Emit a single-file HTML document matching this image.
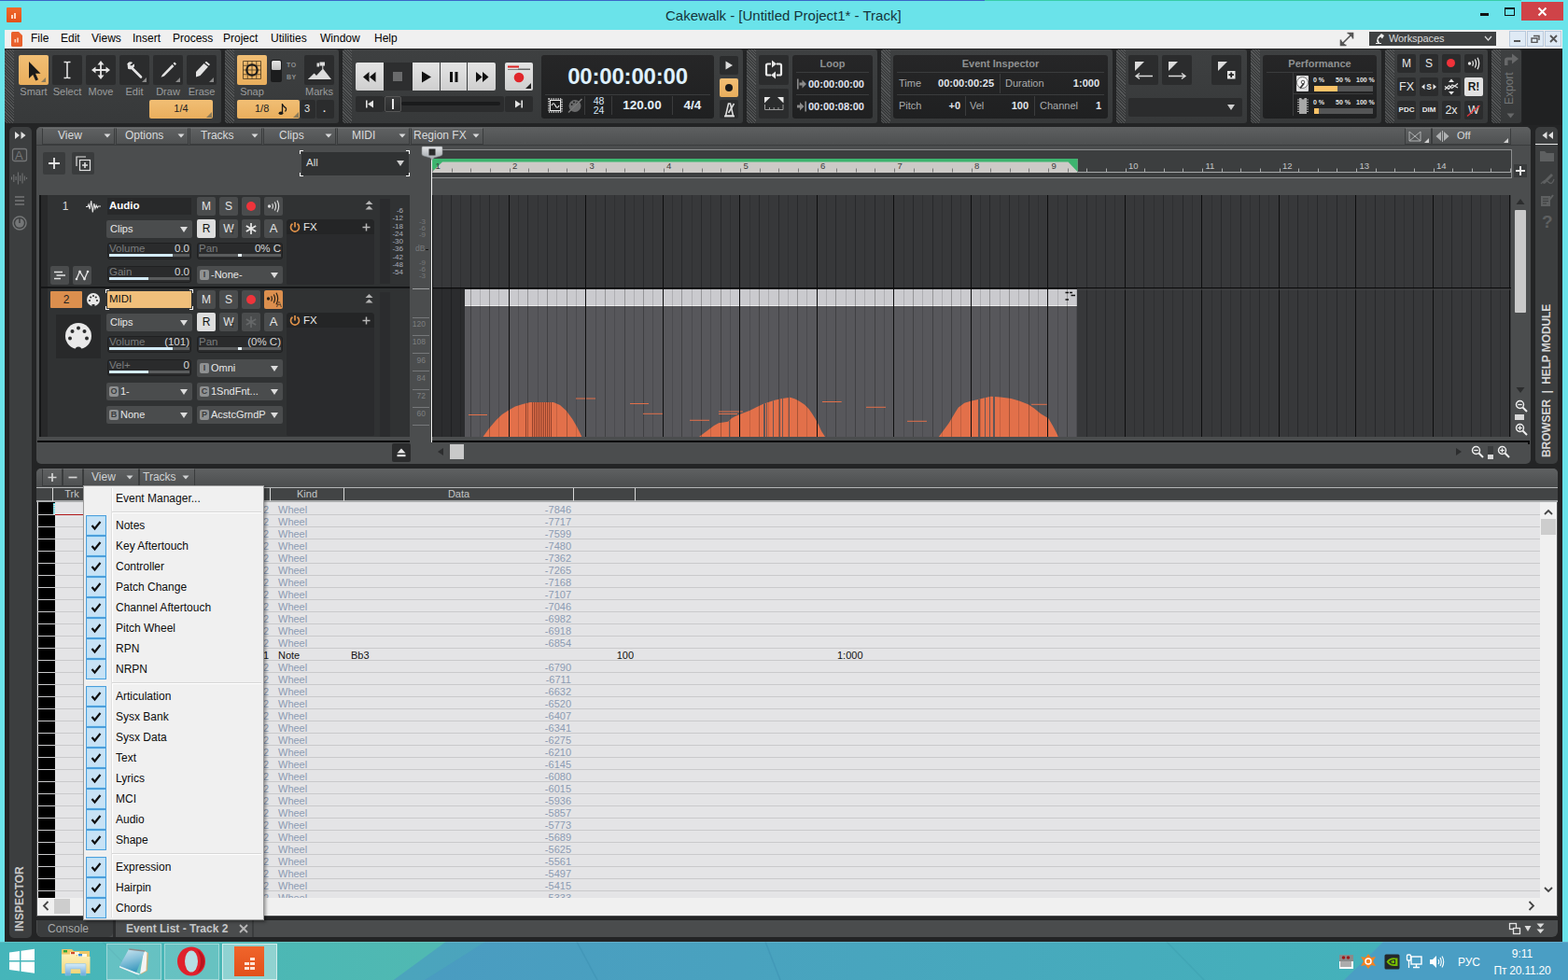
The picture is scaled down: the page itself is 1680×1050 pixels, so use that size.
<!DOCTYPE html>
<html><head><meta charset="utf-8"><title>Cakewalk</title><style>
html,body{margin:0;padding:0;}
body{width:1680px;height:1050px;overflow:hidden;position:relative;background:#6ae3ea;font-family:"Liberation Sans",sans-serif;font-size:12px;color:#e6e6e6;}
div,svg{position:absolute;box-sizing:border-box;}
.t{white-space:nowrap;line-height:1;}
.c{text-align:center;white-space:nowrap;line-height:1;}
.r{text-align:right;white-space:nowrap;line-height:1;}
.btn{background:#4b4d4e;border-radius:2px;}
.dd{background:#4b4d4e;border-radius:2px;}
.hatch{background:repeating-linear-gradient(45deg,rgba(255,255,255,0) 0,rgba(255,255,255,0) 1.5px,rgba(255,255,255,0.15) 1.5px,rgba(255,255,255,0.15) 2.3px);border-radius:3px 0 0 3px;}
.mod{background:#3d3f40;border-radius:3px;}
.tb{background:#2b2c2d;border-radius:2px;}
.lcd{background:linear-gradient(#262627,#1f2021);border-radius:3px;}
</style></head><body>
<div style="left:0px;top:0px;width:1055px;height:1px;background:#3a66c8;"></div>
<div style="left:1055px;top:0px;width:575px;height:1px;background:#38cda6;"></div>
<div style="left:7px;top:8px;width:16px;height:16px;background:linear-gradient(#f0682a,#e2521a);border-radius:1px;"></div>
<div style="left:12px;top:16px;width:2px;height:4px;background:#ffd9c4;"></div>
<div style="left:15px;top:14px;width:2px;height:6px;background:#ffd9c4;"></div>
<div class="t" style="left:0px;top:9px;left:713px;font-size:15px;color:#15343a;letter-spacing:0px;">Cakewalk - [Untitled Project1* - Track]</div>
<div style="left:1586px;top:14px;width:9px;height:3px;background:#111;"></div>
<div style="left:1612px;top:8px;width:11px;height:9px;border:1px solid #111;border-top:2px solid #111;"></div>
<div style="left:1630px;top:2px;width:45px;height:20px;background:#cf4348;"></div>
<svg style="left:1647px;top:7px;" width="11" height="11" viewBox="0 0 11 11"><path d="M1.5 1.5L9.5 9.5M9.5 1.5L1.5 9.5" stroke="#fff" stroke-width="2" fill="none"/></svg>
<div style="left:5px;top:32px;width:1669px;height:20px;background:#f0f0f0;"></div>
<svg style="left:12px;top:34px;" width="12" height="16" viewBox="0 0 12 16"><path d="M0 1.5Q0 0 1.5 0H8L12 4V14.5Q12 16 10.5 16H1.5Q0 16 0 14.5Z" fill="#e9602c"/><rect x="3.5" y="8" width="1.6" height="3.5" fill="#ffd5c0"/><rect x="6.2" y="6.5" width="1.6" height="5" fill="#ffd5c0"/></svg>
<div class="t" style="left:33px;top:35px;font-size:12px;color:#000;">File</div>
<div class="t" style="left:65px;top:35px;font-size:12px;color:#000;">Edit</div>
<div class="t" style="left:98px;top:35px;font-size:12px;color:#000;">Views</div>
<div class="t" style="left:142px;top:35px;font-size:12px;color:#000;">Insert</div>
<div class="t" style="left:185px;top:35px;font-size:12px;color:#000;">Process</div>
<div class="t" style="left:239px;top:35px;font-size:12px;color:#000;">Project</div>
<div class="t" style="left:290px;top:35px;font-size:12px;color:#000;">Utilities</div>
<div class="t" style="left:343px;top:35px;font-size:12px;color:#000;">Window</div>
<div class="t" style="left:401px;top:35px;font-size:12px;color:#000;">Help</div>
<svg style="left:1434px;top:33px;" width="18" height="18" viewBox="0 0 18 18"><path d="M3 15L15 3M9.5 2.5H15.5V8.5M2.5 9.5V15.5H8.5" stroke="#555" stroke-width="1.6" fill="none"/><path d="M15.8 2.2V8.2L9.8 2.2ZM2.2 15.8V9.8L8.2 15.8Z" fill="#555"/></svg>
<div style="left:1467px;top:34px;width:136px;height:15px;background:#3f4142;"></div>
<svg style="left:1472px;top:35px;" width="12" height="13" viewBox="0 0 12 13"><path d="M2 12H8V11H6L4.5 7L7 4.5L9 6.5L11 3L8 1L4 5L3 9L4 11H2Z" fill="#eee"/></svg>
<div class="t" style="left:1488px;top:36px;font-size:11px;color:#ddd;letter-spacing:-0.1px;">Workspaces</div>
<svg style="left:1590px;top:38px;" width="9" height="7" viewBox="0 0 9 7"><path d="M1 1L4.5 5L8 1" stroke="#ddd" stroke-width="1.2" fill="none"/></svg>
<div style="left:1617px;top:33px;width:18px;height:17px;background:#dfeaf5;border:1px solid #b9c9dc;"></div>
<div style="left:1636px;top:33px;width:18px;height:17px;background:#dfeaf5;border:1px solid #b9c9dc;"></div>
<div style="left:1655px;top:33px;width:18px;height:17px;background:#dfeaf5;border:1px solid #b9c9dc;"></div>
<div style="left:1622px;top:43px;width:7px;height:2px;background:#555;"></div>
<svg style="left:1640px;top:37px;" width="10" height="9" viewBox="0 0 10 9"><path d="M3 1.5H9V6M1 4H7V8.5H1Z" stroke="#555" stroke-width="1.4" fill="none"/></svg>
<svg style="left:1660px;top:37px;" width="9" height="9" viewBox="0 0 9 9"><path d="M1 1L8 8M8 1L1 8" stroke="#555" stroke-width="1.8" fill="none"/></svg>
<div style="left:5px;top:52px;width:1669px;height:958px;background:#232425;"></div>
<div style="left:5px;top:53px;width:232px;height:79px;background:linear-gradient(#3e4041,#37393a);border-radius:3px;"></div>
<div class="hatch" style="left:5px;top:53px;width:10px;height:79px;"></div>
<div style="left:20px;top:59px;width:32px;height:32px;background:linear-gradient(#f1be74,#e9ae5d);border-radius:2px;"></div>
<div style="left:56px;top:59px;width:32px;height:32px;background:#2b2c2d;border-radius:2px;"></div>
<div style="left:92px;top:59px;width:32px;height:32px;background:#2b2c2d;border-radius:2px;"></div>
<div style="left:128px;top:59px;width:32px;height:32px;background:#2b2c2d;border-radius:2px;"></div>
<div style="left:164px;top:59px;width:32px;height:32px;background:#2b2c2d;border-radius:2px;"></div>
<div style="left:200px;top:59px;width:32px;height:32px;background:#2b2c2d;border-radius:2px;"></div>
<svg style="left:20px;top:59px;" width="32" height="32" viewBox="0 0 32 32"><path d="M11 7V25L15.2 21L18.2 27.5L21 26.2L18 19.8H23.5Z" fill="#1a1a1a"/><path d="M29 24V29H24Z" fill="#8a7a5a"/></svg>
<svg style="left:56px;top:59px;" width="32" height="32" viewBox="0 0 32 32"><path d="M12.5 7.5H15Q16 7.5 16 8.5V23.5Q16 24.5 15 24.5H12.5M19.5 7.5H17Q16 7.5 16 8.5M19.5 24.5H17Q16 24.5 16 23.5" stroke="#e4e4e4" stroke-width="1.6" fill="none"/></svg>
<svg style="left:92px;top:59px;" width="32" height="32" viewBox="0 0 32 32"><path d="M16 8V24M8 16H24" stroke="#e4e4e4" stroke-width="1.8"/><path d="M16 6L19.5 10.5H12.5ZM16 26L19.5 21.5H12.5ZM6 16L10.5 12.5V19.5ZM26 16L21.5 12.5V19.5Z" fill="#e4e4e4"/></svg>
<svg style="left:128px;top:59px;" width="32" height="32" viewBox="0 0 32 32"><path d="M12.5 13L23 23.5" stroke="#e4e4e4" stroke-width="2.6" stroke-linecap="round"/><path d="M8.5 9.5Q10 7 13.5 8L11 10.5L12.8 12.3L15.5 10Q16 13 13.5 14.5Q11 15.5 9 14" fill="#e4e4e4" stroke="#e4e4e4" stroke-width="1"/><path d="M29 24V29H24Z" fill="#8a8a8a"/></svg>
<svg style="left:164px;top:59px;" width="32" height="32" viewBox="0 0 32 32"><path d="M10 21L20.5 10L22.5 12L12 22.5L8.5 23.8Z" fill="#e4e4e4"/><path d="M21.5 9L23 7.5L25 9.5L23.5 11Z" fill="#e4e4e4"/><path d="M29 24V29H24Z" fill="#8a8a8a"/></svg>
<svg style="left:200px;top:59px;" width="32" height="32" viewBox="0 0 32 32"><path d="M10 18L18.5 9L23 12.5L14.5 22L10 23.5Z" fill="#e4e4e4"/><path d="M19.5 8L21 6.8L25 10L23.8 11.5Z" fill="#e4e4e4"/><path d="M29 24V29H24Z" fill="#8a8a8a"/></svg>
<div class="c" style="left:11px;top:93px;width:50px;font-size:11px;color:#9a9c9d;">Smart</div>
<div class="c" style="left:47px;top:93px;width:50px;font-size:11px;color:#9a9c9d;">Select</div>
<div class="c" style="left:83px;top:93px;width:50px;font-size:11px;color:#9a9c9d;">Move</div>
<div class="c" style="left:119px;top:93px;width:50px;font-size:11px;color:#9a9c9d;">Edit</div>
<div class="c" style="left:155px;top:93px;width:50px;font-size:11px;color:#9a9c9d;">Draw</div>
<div class="c" style="left:191px;top:93px;width:50px;font-size:11px;color:#9a9c9d;">Erase</div>
<div style="left:160px;top:107px;width:68px;height:20px;background:linear-gradient(#f1be74,#e9ae5d);border-radius:2px;"></div>
<div class="c" style="left:160px;top:111px;width:68px;font-size:11px;color:#222;">1/4</div>
<svg style="left:221px;top:120px;" width="6" height="6" viewBox="0 0 6 6"><path d="M6 0V6H0Z" fill="#8a7a5a"/></svg>
<div style="left:241px;top:53px;width:122px;height:79px;background:linear-gradient(#3e4041,#37393a);border-radius:3px;"></div>
<div class="hatch" style="left:241px;top:53px;width:10px;height:79px;"></div>
<div style="left:254px;top:59px;width:32px;height:32px;background:linear-gradient(#f1be74,#e9ae5d);border-radius:2px;"></div>
<svg style="left:254px;top:59px;" width="32" height="32" viewBox="0 0 32 32"><path d="M6.5 6.5H25.5V25.5H6.5ZM6.5 11.25H25.5M6.5 16H25.5M6.5 20.75H25.5M11.25 6.5V25.5M16 6.5V25.5M20.75 6.5V25.5" stroke="#4a3a20" stroke-width="0.8" fill="none"/><circle cx="16" cy="16" r="5.8" stroke="#1a1a1a" stroke-width="2" fill="none"/></svg>
<div style="left:290px;top:64px;width:12px;height:24px;background:#1b1c1d;border-radius:2px;"></div>
<div style="left:291px;top:65px;width:10px;height:10px;background:linear-gradient(#e6e6e6,#bdbdbd);border-radius:1.5px;"></div>
<div class="t" style="left:307px;top:66px;font-size:7px;font-weight:bold;color:#8d8f90;letter-spacing:0.5px;">TO</div>
<div class="t" style="left:307px;top:79px;font-size:7px;font-weight:bold;color:#8d8f90;letter-spacing:0.5px;">BY</div>
<div style="left:326px;top:59px;width:32px;height:32px;background:#2b2c2d;border-radius:2px;"></div>
<svg style="left:326px;top:59px;" width="32" height="32" viewBox="0 0 32 32"><path d="M4 26L10.5 19.5L13 22L20 14.5L29 26ZM19.3 15V8.5H20.3V15Z" fill="#dcdcdc"/><path d="M13.5 8.5H16V12.5H13.5ZM16.5 7.5H22V11.5H16.5Z" fill="#dcdcdc"/><path d="M11.2 20.2L15 26H4Z" fill="#dcdcdc"/></svg>
<div class="c" style="left:245px;top:93px;width:50px;font-size:11px;color:#9a9c9d;">Snap</div>
<div class="c" style="left:317px;top:93px;width:50px;font-size:11px;color:#9a9c9d;">Marks</div>
<div style="left:254px;top:107px;width:67px;height:20px;background:linear-gradient(#f1be74,#e9ae5d);border-radius:2px;"></div>
<div class="t" style="left:273px;top:111px;font-size:11px;color:#222;">1/8</div>
<svg style="left:297px;top:109px;" width="12" height="16" viewBox="0 0 12 16"><path d="M5.5 12V2Q6 5 9.5 7Q10 9 8.5 10.5" stroke="#1a1a1a" stroke-width="1.3" fill="none"/><ellipse cx="4" cy="12.3" rx="2.4" ry="1.8" fill="#1a1a1a"/></svg>
<svg style="left:314px;top:120px;" width="6" height="6" viewBox="0 0 6 6"><path d="M6 0V6H0Z" fill="#8a7a5a"/></svg>
<div style="left:322px;top:107px;width:16px;height:20px;background:#2b2c2d;border-radius:2px;"></div>
<div style="left:339px;top:107px;width:19px;height:20px;background:#2b2c2d;border-radius:2px;"></div>
<div class="t" style="left:326px;top:111px;font-size:11px;color:#e0e0e0;">3</div>
<div class="t" style="left:346px;top:111px;font-size:11px;color:#e0e0e0;font-weight:bold;">.</div>
<div style="left:367px;top:53px;width:429px;height:79px;background:linear-gradient(#3e4041,#37393a);border-radius:3px;"></div>
<div class="hatch" style="left:367px;top:53px;width:10px;height:79px;"></div>
<div style="left:381px;top:67px;width:30px;height:30px;background:linear-gradient(#e4e4e4,#cfcfcf);border-radius:2px 0 0 2px;"></div>
<div style="left:411px;top:67px;width:31px;height:30px;background:#2d2e2f;"></div>
<div style="left:442px;top:67px;width:29px;height:30px;background:linear-gradient(#e4e4e4,#cfcfcf);"></div>
<div style="left:472px;top:67px;width:28px;height:30px;background:linear-gradient(#e4e4e4,#cfcfcf);"></div>
<div style="left:501px;top:67px;width:30px;height:30px;background:linear-gradient(#e4e4e4,#cfcfcf);border-radius:0 2px 2px 0;"></div>
<div style="left:541px;top:67px;width:30px;height:30px;background:linear-gradient(#e4e4e4,#cfcfcf);border-radius:2px;"></div>
<svg style="left:381px;top:67px;" width="30" height="30" viewBox="0 0 30 30"><path d="M14.5 10V21L8 15.5ZM21.5 10V21L15 15.5Z" fill="#111"/></svg>
<div style="left:421px;top:77px;width:10px;height:10px;background:#6a6b6c;"></div>
<svg style="left:442px;top:67px;" width="29" height="30" viewBox="0 0 29 30"><path d="M10 9.5V21.5L20 15.5Z" fill="#111"/></svg>
<svg style="left:472px;top:67px;" width="28" height="30" viewBox="0 0 28 30"><path d="M10 10H13V21H10ZM15.5 10H18.5V21H15.5Z" fill="#111"/></svg>
<svg style="left:501px;top:67px;" width="30" height="30" viewBox="0 0 30 30"><path d="M9 10V21L15.5 15.5ZM16 10V21L22.5 15.5Z" fill="#111"/></svg>
<svg style="left:541px;top:67px;" width="30" height="30" viewBox="0 0 30 30"><rect x="3" y="3.5" width="12" height="2" fill="#d22"/><path d="M3 8L4 7L5 8L6 7L7 8L8 7L9 8L10 7L11 8L12 7L13 8L14 7L15 8" stroke="#555" stroke-width="0.7" fill="none"/><rect x="14" y="6.5" width="13" height="1.5" fill="#666"/><circle cx="15" cy="16" r="5.3" fill="#e0262b"/><path d="M28 22V28H22Z" fill="#222"/></svg>
<div style="left:381px;top:103px;width:30px;height:17px;background:#2b2c2d;border-radius:2px;"></div>
<div style="left:411px;top:103px;width:129px;height:17px;background:#2b2c2d;border-radius:2px;"></div>
<div style="left:541px;top:103px;width:30px;height:17px;background:#2b2c2d;border-radius:2px;"></div>
<svg style="left:381px;top:103px;" width="30" height="17" viewBox="0 0 30 17"><path d="M11 4.5H12.6V12.5H11ZM19 4.5V12.5L13 8.5Z" fill="#e4e4e4"/></svg>
<svg style="left:541px;top:103px;" width="30" height="17" viewBox="0 0 30 17"><path d="M19 4.5H17.4V12.5H19ZM11 4.5V12.5L17 8.5Z" fill="#e4e4e4"/></svg>
<div style="left:430px;top:109px;width:106px;height:4px;background:#1a1b1c;border-radius:2px;"></div>
<div style="left:412px;top:103px;width:18px;height:17px;background:linear-gradient(#3a3b3c,#2c2d2e);border:1px solid #555;border-radius:2px;"></div>
<div style="left:420px;top:106px;width:2px;height:11px;background:#e8e8e8;"></div>
<div class="lcd" style="left:580px;top:59px;width:185px;height:68px;"></div>
<div class="c" style="left:580px;top:70px;width:185px;font-size:24px;font-weight:bold;color:#def0fc;letter-spacing:-0.2px;">00:00:00:00</div>
<div style="left:584px;top:101px;width:177px;height:1px;background:#3b3c3d;"></div>
<div style="left:626px;top:103px;width:1px;height:20px;background:#3b3c3d;"></div>
<div style="left:655px;top:103px;width:1px;height:20px;background:#3b3c3d;"></div>
<div style="left:720px;top:103px;width:1px;height:20px;background:#3b3c3d;"></div>
<svg style="left:586px;top:104px;" width="18" height="18" viewBox="0 0 18 18"><rect x="2" y="2" width="14" height="14" fill="none" stroke="#e8e8e8" stroke-width="1.5" stroke-dasharray="1.2 1.2"/><rect x="3.5" y="3.5" width="11" height="11" fill="#1c1d1e" stroke="#e8e8e8" stroke-width="1"/><path d="M5 9Q7 4.5 9 9T13 9" stroke="#e8e8e8" stroke-width="1.2" fill="none"/></svg>
<svg style="left:607px;top:104px;" width="18" height="18" viewBox="0 0 18 18"><circle cx="9" cy="9.5" r="6.5" fill="#6a6b6c"/><circle cx="5.6" cy="8" r="1" fill="#222"/><circle cx="8" cy="5.6" r="1" fill="#222"/><circle cx="11.2" cy="6.2" r="1" fill="#222"/><path d="M2 16.5L16.5 2" stroke="#777" stroke-width="1.6"/></svg>
<div class="c" style="left:628px;top:103px;width:27px;font-size:10.5px;color:#d8e8f8;line-height:10px;">48<br>24</div>
<div class="c" style="left:656px;top:106px;width:64px;font-size:13.5px;font-weight:bold;color:#e4f0fa;">120.00</div>
<div class="c" style="left:721px;top:106px;width:42px;font-size:13.5px;font-weight:bold;color:#e4f0fa;">4/4</div>
<div style="left:771px;top:60px;width:20px;height:20px;background:#2b2c2d;border-radius:2px;"></div>
<div style="left:771px;top:84px;width:20px;height:20px;background:linear-gradient(#f1be74,#e9ae5d);border-radius:2px;"></div>
<div style="left:771px;top:107px;width:20px;height:20px;background:#2b2c2d;border-radius:2px;"></div>
<svg style="left:771px;top:60px;" width="20" height="20" viewBox="0 0 20 20"><path d="M6.5 5.5V14.5L14 10Z" fill="#dcdcdc"/></svg>
<div style="left:777px;top:90px;width:8px;height:8px;background:#1a1a1a;border-radius:4px;"></div>
<svg style="left:771px;top:107px;" width="20" height="20" viewBox="0 0 20 20"><path d="M6.5 17L9.5 4H11.5L14.5 17Z" stroke="#dcdcdc" stroke-width="1.6" fill="none"/><path d="M5 17.5H16" stroke="#dcdcdc" stroke-width="1.8"/><path d="M9.5 14L15.5 4" stroke="#dcdcdc" stroke-width="1.5"/></svg>
<div style="left:800px;top:53px;width:140px;height:79px;background:linear-gradient(#3e4041,#37393a);border-radius:3px;"></div>
<div class="hatch" style="left:800px;top:53px;width:10px;height:79px;"></div>
<div style="left:813px;top:59px;width:32px;height:32px;background:#2b2c2d;border-radius:2px;"></div>
<div style="left:813px;top:95px;width:32px;height:32px;background:#2b2c2d;border-radius:2px;"></div>
<svg style="left:813px;top:59px;" width="32" height="32" viewBox="0 0 32 32"><path d="M13 9.5H9.5Q8 9.5 8 11V20Q8 21.5 9.5 21.5H13M19 9.5H22.5Q24 9.5 24 11V20Q24 21.5 22.5 21.5H19" stroke="#e8e8e8" stroke-width="2.2" fill="none"/><path d="M14 5.5L19 9.5L14 13.5ZM18 17.5L13 21.5L18 25.5Z" fill="#e8e8e8"/></svg>
<svg style="left:813px;top:95px;" width="32" height="32" viewBox="0 0 32 32"><path d="M6 9H12.5L6 15.5ZM26.5 9H20L26.5 15.5Z" fill="#e8e8e8"/><path d="M6.5 17V22.5H26V17M11.5 20V22.5M16.2 20V22.5M21 20V22.5" stroke="#9a9a9a" stroke-width="1" fill="none"/></svg>
<div class="lcd" style="left:849px;top:59px;width:86px;height:68px;"></div>
<div class="c" style="left:849px;top:63px;width:86px;font-size:11px;font-weight:bold;color:#8f9192;">Loop</div>
<div style="left:853px;top:77px;width:78px;height:1px;background:#3b3c3d;"></div>
<div style="left:853px;top:101px;width:78px;height:1px;background:#3b3c3d;"></div>
<div class="t" style="left:866px;top:85px;font-size:11px;font-weight:bold;color:#e0e4f0;">00:00:00:00</div>
<div class="t" style="left:866px;top:109px;font-size:11px;font-weight:bold;color:#e0e4f0;">00:00:08:00</div>
<svg style="left:853px;top:84px;" width="12" height="12" viewBox="0 0 12 12"><rect x="1" y="0.5" width="1.6" height="11" fill="#8a8a8a"/><path d="M3.5 4.5H6.5V1.5L11 6L6.5 10.5V7.5H3.5Z" fill="#8a8a8a"/></svg>
<svg style="left:853px;top:108px;" width="12" height="12" viewBox="0 0 12 12"><rect x="9.4" y="0.5" width="1.6" height="11" fill="#8a8a8a"/><path d="M1 4.5H4V1.5L8.5 6L4 10.5V7.5H1Z" fill="#8a8a8a"/></svg>
<div style="left:944px;top:53px;width:248px;height:79px;background:linear-gradient(#3e4041,#37393a);border-radius:3px;"></div>
<div class="hatch" style="left:944px;top:53px;width:10px;height:79px;"></div>
<div class="lcd" style="left:957px;top:59px;width:230px;height:68px;"></div>
<div class="c" style="left:957px;top:63px;width:230px;font-size:11px;font-weight:bold;color:#8f9192;">Event Inspector</div>
<div style="left:961px;top:77px;width:222px;height:1px;background:#3b3c3d;"></div>
<div style="left:961px;top:101px;width:222px;height:1px;background:#3b3c3d;"></div>
<div style="left:1071px;top:79px;width:1px;height:21px;background:#3b3c3d;"></div>
<div style="left:1034px;top:103px;width:1px;height:21px;background:#3b3c3d;"></div>
<div style="left:1108px;top:103px;width:1px;height:21px;background:#3b3c3d;"></div>
<div class="t" style="left:963px;top:84px;font-size:11px;color:#a9abac;">Time</div>
<div class="t" style="left:1077px;top:84px;font-size:11px;color:#a9abac;">Duration</div>
<div class="r" style="left:985px;top:84px;width:80px;font-size:11px;font-weight:bold;color:#e0e4ea;">00:00:00:25</div>
<div class="r" style="left:1118px;top:84px;width:60px;font-size:11px;font-weight:bold;color:#e0e4ea;">1:000</div>
<div class="t" style="left:963px;top:108px;font-size:11px;color:#a9abac;">Pitch</div>
<div class="t" style="left:1039px;top:108px;font-size:11px;color:#a9abac;">Vel</div>
<div class="t" style="left:1114px;top:108px;font-size:11px;color:#a9abac;">Channel</div>
<div class="r" style="left:989px;top:108px;width:40px;font-size:11px;font-weight:bold;color:#e0e4ea;">+0</div>
<div class="r" style="left:1062px;top:108px;width:40px;font-size:11px;font-weight:bold;color:#e0e4ea;">100</div>
<div class="r" style="left:1140px;top:108px;width:40px;font-size:11px;font-weight:bold;color:#e0e4ea;">1</div>
<div style="left:1196px;top:53px;width:140px;height:79px;background:linear-gradient(#3e4041,#37393a);border-radius:3px;"></div>
<div class="hatch" style="left:1196px;top:53px;width:10px;height:79px;"></div>
<div style="left:1209px;top:59px;width:32px;height:32px;background:#2b2c2d;border-radius:2px;"></div>
<div style="left:1245px;top:59px;width:32px;height:32px;background:#2b2c2d;border-radius:2px;"></div>
<div style="left:1298px;top:59px;width:32px;height:32px;background:#2b2c2d;border-radius:2px;"></div>
<svg style="left:1209px;top:59px;" width="32" height="32" viewBox="0 0 32 32"><path d="M7 7H17L7 17Z" fill="#dcdcdc"/><path d="M8 22.5H26M12 19.5L8 22.5L12 25.5" stroke="#dcdcdc" stroke-width="1.3" fill="none"/></svg>
<svg style="left:1245px;top:59px;" width="32" height="32" viewBox="0 0 32 32"><path d="M7 7H17L7 17Z" fill="#dcdcdc"/><path d="M7 22.5H25M21 19.5L25 22.5L21 25.5" stroke="#dcdcdc" stroke-width="1.3" fill="none"/></svg>
<svg style="left:1298px;top:59px;" width="32" height="32" viewBox="0 0 32 32"><path d="M7 7H17L7 17Z" fill="#dcdcdc"/><rect x="17" y="17" width="8.5" height="8.5" fill="#e8e8e8"/><path d="M21.2 18.5V24M18.5 21.2H24" stroke="#222" stroke-width="1.8"/></svg>
<div style="left:1209px;top:105px;width:122px;height:20px;background:#2b2c2d;border-radius:2px;"></div>
<svg style="left:1314px;top:111px;" width="10" height="8" viewBox="0 0 10 8"><path d="M1 1H9L5 7Z" fill="#cfcfcf"/></svg>
<div style="left:1340px;top:53px;width:140px;height:79px;background:linear-gradient(#3e4041,#37393a);border-radius:3px;"></div>
<div class="hatch" style="left:1340px;top:53px;width:10px;height:79px;"></div>
<div class="lcd" style="left:1353px;top:59px;width:122px;height:68px;"></div>
<div class="c" style="left:1353px;top:63px;width:122px;font-size:11px;font-weight:bold;color:#8f9192;">Performance</div>
<div style="left:1357px;top:77px;width:114px;height:1px;background:#3b3c3d;"></div>
<div style="left:1385px;top:78px;width:1px;height:46px;background:#3b3c3d;"></div>
<div style="left:1386px;top:100px;width:85px;height:1px;background:#3b3c3d;"></div>
<div class="t" style="left:1407px;top:82px;font-size:7px;font-weight:bold;color:#e4e4e4;letter-spacing:0;">0 %</div>
<div class="t" style="left:1431px;top:82px;font-size:7px;font-weight:bold;color:#e4e4e4;letter-spacing:0;">50 %</div>
<div class="t" style="left:1453px;top:82px;font-size:7px;font-weight:bold;color:#e4e4e4;letter-spacing:0;">100 %</div>
<div class="t" style="left:1407px;top:106px;font-size:7px;font-weight:bold;color:#e4e4e4;letter-spacing:0;">0 %</div>
<div class="t" style="left:1431px;top:106px;font-size:7px;font-weight:bold;color:#e4e4e4;letter-spacing:0;">50 %</div>
<div class="t" style="left:1453px;top:106px;font-size:7px;font-weight:bold;color:#e4e4e4;letter-spacing:0;">100 %</div>
<div style="left:1408px;top:92px;width:63px;height:6px;background:#545556;"></div>
<div style="left:1408px;top:92px;width:25px;height:6px;background:#fbc368;"></div>
<div style="left:1408px;top:116px;width:63px;height:6px;background:#545556;"></div>
<div style="left:1408px;top:116px;width:5px;height:6px;background:#fbc368;"></div>
<svg style="left:1388px;top:80px;" width="15" height="19" viewBox="0 0 15 19"><rect x="1" y="1" width="13" height="17" rx="1" fill="#dedede"/><circle cx="7.5" cy="8.5" r="6" fill="#f4f4f4" stroke="#555" stroke-width="0.8"/><circle cx="8" cy="8" r="1.8" fill="none" stroke="#444" stroke-width="0.9"/><path d="M5 14.5L9 9.5" stroke="#333" stroke-width="1.8"/></svg>
<svg style="left:1389px;top:104px;" width="14" height="19" viewBox="0 0 14 19"><rect x="3" y="1" width="8" height="17" fill="#a8a8a8"/><path d="M1 3H3M1 5.5H3M1 8H3M1 10.5H3M1 13H3M1 15.5H3M11 3H13M11 5.5H13M11 8H13M11 10.5H13M11 13H13M11 15.5H13" stroke="#a8a8a8" stroke-width="1.2"/><circle cx="7" cy="1" r="1.6" fill="#202122"/></svg>
<div style="left:1484px;top:53px;width:110px;height:79px;background:linear-gradient(#3e4041,#37393a);border-radius:3px;"></div>
<div class="hatch" style="left:1484px;top:53px;width:10px;height:79px;"></div>
<div style="left:1497px;top:58px;width:20px;height:20px;background:#2b2c2d;border-radius:2px;"></div>
<div style="left:1521px;top:58px;width:20px;height:20px;background:#2b2c2d;border-radius:2px;"></div>
<div style="left:1545px;top:58px;width:20px;height:20px;background:#2b2c2d;border-radius:2px;"></div>
<div style="left:1569px;top:58px;width:20px;height:20px;background:#2b2c2d;border-radius:2px;"></div>
<div style="left:1497px;top:83px;width:20px;height:20px;background:#2b2c2d;border-radius:2px;"></div>
<div style="left:1521px;top:83px;width:20px;height:20px;background:#2b2c2d;border-radius:2px;"></div>
<div style="left:1545px;top:83px;width:20px;height:20px;background:#2b2c2d;border-radius:2px;"></div>
<div style="left:1569px;top:83px;width:20px;height:20px;background:#e2e2e2;border-radius:2px;"></div>
<div style="left:1497px;top:108px;width:20px;height:20px;background:#2b2c2d;border-radius:2px;"></div>
<div style="left:1521px;top:108px;width:20px;height:20px;background:#2b2c2d;border-radius:2px;"></div>
<div style="left:1545px;top:108px;width:20px;height:20px;background:#2b2c2d;border-radius:2px;"></div>
<div style="left:1569px;top:108px;width:20px;height:20px;background:#2b2c2d;border-radius:2px;"></div>
<div class="c" style="left:1497px;top:58px;width:20px;height:20px;line-height:20px;color:#e8e8e8;font-size:12px;">M</div>
<div class="c" style="left:1521px;top:58px;width:20px;height:20px;line-height:20px;color:#e8e8e8;font-size:12px;">S</div>
<div style="left:1550px;top:63px;width:9px;height:9px;background:#f0323a;border-radius:5px;"></div>
<svg style="left:1569px;top:58px;" width="20" height="20" viewBox="0 0 20 20"><circle cx="5.5" cy="10" r="1.7" fill="#e4e4e4"/><path d="M8.7 7.3Q10.2 10 8.7 12.7M11.3 5.5Q13.8 10 11.3 14.5M14 3.8Q17.3 10 14 16.2" stroke="#e4e4e4" stroke-width="1.3" fill="none"/></svg>
<div class="c" style="left:1497px;top:83px;width:20px;height:20px;line-height:20px;color:#e8e8e8;font-size:12.5px;">FX</div>
<div class="c" style="left:1521px;top:83px;width:20px;height:20px;line-height:20px;color:#e8e8e8;font-size:8.5px;font-weight:bold;">S</div>
<svg style="left:1521px;top:83px;" width="20" height="20" viewBox="0 0 20 20"><path d="M2 10L5.5 7V13ZM18 10L14.5 7V13Z" fill="#e4e4e4"/></svg>
<svg style="left:1545px;top:83px;" width="20" height="20" viewBox="0 0 20 20"><path d="M3 13L7.5 8.5L10.5 11.5L17 6.5M3 9.5L7 12.5L11 8L17 11" stroke="#e4e4e4" stroke-width="1.2" fill="none"/><path d="M10 1.5L13 5H7ZM10 18.5L13 15H7Z" fill="#e4e4e4"/></svg>
<div class="c" style="left:1569px;top:83px;width:20px;height:20px;line-height:20px;color:#e8e8e8;font-size:12px;font-weight:bold;color:#1a1a1a;">R!</div>
<div class="c" style="left:1497px;top:108px;width:20px;height:20px;line-height:20px;color:#e8e8e8;font-size:8px;font-weight:bold;">PDC</div>
<div class="c" style="left:1521px;top:108px;width:20px;height:20px;line-height:20px;color:#e8e8e8;font-size:8px;font-weight:bold;">DIM</div>
<div class="c" style="left:1545px;top:108px;width:20px;height:20px;line-height:20px;color:#e8e8e8;font-size:12.5px;">2x</div>
<div class="c" style="left:1569px;top:108px;width:20px;height:20px;line-height:20px;color:#e8e8e8;font-size:12.5px;">W</div>
<svg style="left:1569px;top:108px;" width="20" height="20" viewBox="0 0 20 20"><path d="M3 16.5L16.5 5" stroke="#e0353c" stroke-width="1.4"/></svg>
<div style="left:1598px;top:53px;width:32px;height:79px;background:linear-gradient(#3e4041,#37393a);border-radius:3px;"></div>
<div class="hatch" style="left:1598px;top:53px;width:10px;height:79px;"></div>
<div class="t" style="left:1611px;top:112px;width:46px;height:14px;transform-origin:0 0;transform:rotate(-90deg);font-size:12px;color:#747677;">Export</div>
<svg style="left:1610px;top:55px;" width="18" height="17" viewBox="0 0 18 17"><path d="M2 15V9.5Q2 6.5 5 6.5H10V2.5L17 8L10 13.5V9.5H5.5V15Z" fill="#676869"/></svg>
<svg style="left:1614px;top:121px;" width="9" height="6" viewBox="0 0 9 6"><path d="M0.5 0.5H8.5L4.5 5.5Z" fill="#676869"/></svg>
<div style="left:1631px;top:52px;width:43px;height:82px;background:#202122;"></div>
<div style="left:10px;top:136px;width:24px;height:869px;background:#3c3e3f;border-radius:5px;"></div>
<svg style="left:14px;top:139px;" width="16" height="12" viewBox="0 0 16 12"><path d="M2 2L7 6L2 10ZM8.5 2L13.5 6L8.5 10Z" fill="#e0e0e0"/></svg>
<svg style="left:12px;top:158px;" width="20" height="18" viewBox="0 0 20 18"><rect x="1.5" y="1.5" width="15" height="13" rx="2" stroke="#747677" stroke-width="1.3" fill="none"/></svg>
<div class="t" style="left:16px;top:160px;font-size:13px;color:#747677;">A</div>
<svg style="left:11px;top:183px;" width="20" height="16" viewBox="0 0 20 16"><path d="M1.5 6.5V9.5M3.8 4V12M6.1 6V10M8.4 1.5V14.5M10.7 5V11M13 2.5V13.5M15.3 5.5V10.5M17.6 7V9" stroke="#747677" stroke-width="1"/></svg>
<svg style="left:15px;top:209px;" width="12" height="12" viewBox="0 0 12 12"><path d="M1 2H11M1 6H11M1 10H11" stroke="#747677" stroke-width="1.4"/></svg>
<svg style="left:12px;top:230px;" width="18" height="18" viewBox="0 0 18 18"><circle cx="9" cy="9" r="7" stroke="#747677" stroke-width="1.5" fill="none"/><circle cx="9" cy="9" r="4.8" fill="#747677"/><path d="M9 4V9" stroke="#3c3e3f" stroke-width="1.5"/></svg>
<div class="t" style="left:15px;top:998px;transform-origin:0 0;transform:rotate(-90deg);font-size:12px;font-weight:bold;color:#c8c8c8;">INSPECTOR</div>
<div style="left:39px;top:136px;width:1601px;height:361px;background:#4b4d4e;border-radius:5px;"></div>
<div style="left:39px;top:136px;width:1601px;height:20px;background:linear-gradient(#5e6061,#4d4f50);border-radius:5px 5px 0 0;border-bottom:1px solid #3a3c3d;"></div>
<div style="left:45px;top:137px;width:78px;height:18px;background:linear-gradient(#5f6162,#4f5152);border:1px solid #3a3c3d;border-top-color:#6c6e6f;"></div>
<div class="t" style="left:62px;top:139px;font-size:12px;color:#d9dadb;">View</div>
<svg style="left:111px;top:143px;" width="8" height="5" viewBox="0 0 8 5"><path d="M0.5 0.5H7.5L4 4.5Z" fill="#d9dadb"/></svg>
<div style="left:124px;top:137px;width:78px;height:18px;background:linear-gradient(#5f6162,#4f5152);border:1px solid #3a3c3d;border-top-color:#6c6e6f;"></div>
<div class="t" style="left:134px;top:139px;font-size:12px;color:#d9dadb;">Options</div>
<svg style="left:190px;top:143px;" width="8" height="5" viewBox="0 0 8 5"><path d="M0.5 0.5H7.5L4 4.5Z" fill="#d9dadb"/></svg>
<div style="left:203px;top:137px;width:78px;height:18px;background:linear-gradient(#5f6162,#4f5152);border:1px solid #3a3c3d;border-top-color:#6c6e6f;"></div>
<div class="t" style="left:215px;top:139px;font-size:12px;color:#d9dadb;">Tracks</div>
<svg style="left:269px;top:143px;" width="8" height="5" viewBox="0 0 8 5"><path d="M0.5 0.5H7.5L4 4.5Z" fill="#d9dadb"/></svg>
<div style="left:282px;top:137px;width:78px;height:18px;background:linear-gradient(#5f6162,#4f5152);border:1px solid #3a3c3d;border-top-color:#6c6e6f;"></div>
<div class="t" style="left:299px;top:139px;font-size:12px;color:#d9dadb;">Clips</div>
<svg style="left:348px;top:143px;" width="8" height="5" viewBox="0 0 8 5"><path d="M0.5 0.5H7.5L4 4.5Z" fill="#d9dadb"/></svg>
<div style="left:361px;top:137px;width:78px;height:18px;background:linear-gradient(#5f6162,#4f5152);border:1px solid #3a3c3d;border-top-color:#6c6e6f;"></div>
<div class="t" style="left:377px;top:139px;font-size:12px;color:#d9dadb;">MIDI</div>
<svg style="left:427px;top:143px;" width="8" height="5" viewBox="0 0 8 5"><path d="M0.5 0.5H7.5L4 4.5Z" fill="#d9dadb"/></svg>
<div style="left:440px;top:137px;width:78px;height:18px;background:linear-gradient(#5f6162,#4f5152);border:1px solid #3a3c3d;border-top-color:#6c6e6f;"></div>
<div class="t" style="left:443px;top:139px;font-size:12px;color:#d9dadb;">Region FX</div>
<svg style="left:506px;top:143px;" width="8" height="5" viewBox="0 0 8 5"><path d="M0.5 0.5H7.5L4 4.5Z" fill="#d9dadb"/></svg>
<div style="left:1505px;top:137px;width:29px;height:18px;background:linear-gradient(#5f6162,#4f5152);border:1px solid #3a3c3d;border-top-color:#6c6e6f;"></div>
<div style="left:1534px;top:137px;width:85px;height:18px;background:linear-gradient(#5f6162,#4f5152);border:1px solid #3a3c3d;border-top-color:#6c6e6f;"></div>
<svg style="left:1508px;top:139px;" width="18" height="14" viewBox="0 0 18 14"><path d="M2 12V2L14 12V2Z" stroke="#b0b2b3" stroke-width="1" fill="none"/><path d="M2 12H14" stroke="#b0b2b3" stroke-width="1"/></svg>
<svg style="left:1526px;top:148px;" width="5" height="5" viewBox="0 0 5 5"><path d="M5 0V5H0Z" fill="#d0d0d0"/></svg>
<svg style="left:1537px;top:139px;" width="18" height="14" viewBox="0 0 18 14"><path d="M7 2V12L1.5 7ZM10 2V12L15.5 7Z" fill="#b0b2b3"/><path d="M8.5 1V13" stroke="#b0b2b3" stroke-width="1"/></svg>
<div class="t" style="left:1561px;top:140px;font-size:11px;color:#d9dadb;">Off</div>
<svg style="left:1611px;top:148px;" width="5" height="5" viewBox="0 0 5 5"><path d="M5 0V5H0Z" fill="#d0d0d0"/></svg>
<div style="left:46px;top:163px;width:24px;height:24px;background:#3a3c3d;border-radius:2px;"></div>
<div style="left:77px;top:163px;width:24px;height:24px;background:#3a3c3d;border-radius:2px;"></div>
<svg style="left:46px;top:163px;" width="24" height="24" viewBox="0 0 24 24"><path d="M12 6V18M6 12H18" stroke="#e8e8e8" stroke-width="1.8"/></svg>
<svg style="left:77px;top:163px;" width="24" height="24" viewBox="0 0 24 24"><path d="M5 15V5H15" stroke="#e0e0e0" stroke-width="1.2" fill="none"/><rect x="8.5" y="8.5" width="11" height="11" stroke="#e0e0e0" stroke-width="1.2" fill="none"/><path d="M14 11V17M11 14H17" stroke="#e0e0e0" stroke-width="1.6"/></svg>
<div style="left:323px;top:163px;width:115px;height:25px;background:#303233;"></div>
<div class="t" style="left:328px;top:169px;font-size:11.5px;color:#d8d8d8;">All</div>
<svg style="left:424px;top:171px;" width="10" height="8" viewBox="0 0 10 8"><path d="M1 1H9L5 7Z" fill="#cfcfcf"/></svg>
<div style="left:321px;top:161px;width:4px;height:1px;background:#fff;"></div>
<div style="left:321px;top:161px;width:1px;height:4px;background:#fff;"></div>
<div style="left:435px;top:161px;width:4px;height:1px;background:#fff;"></div>
<div style="left:438px;top:161px;width:1px;height:4px;background:#fff;"></div>
<div style="left:321px;top:188px;width:4px;height:1px;background:#fff;"></div>
<div style="left:321px;top:185px;width:1px;height:4px;background:#fff;"></div>
<div style="left:435px;top:188px;width:4px;height:1px;background:#fff;"></div>
<div style="left:438px;top:185px;width:1px;height:4px;background:#fff;"></div>
<div style="left:42px;top:209px;width:397px;height:99px;background:#303233;"></div>
<div style="left:42px;top:309px;width:397px;height:159px;background:#303233;"></div>
<div style="left:42px;top:209px;width:2px;height:259px;background:#141516;"></div>
<div style="left:44px;top:209px;width:7px;height:259px;background:#28292a;"></div>
<div style="left:42px;top:307px;width:397px;height:2px;background:#151617;"></div>
<div style="left:40px;top:472px;width:399px;height:2px;background:#0a0a0b;"></div>
<div class="c" style="left:55px;top:215px;width:30px;font-size:12px;color:#d8d8d8;">1</div>
<svg style="left:91px;top:213px;" width="18" height="16" viewBox="0 0 18 16"><path d="M1 8.5H3L4 6L5.2 11L6.7 2L8.3 14.5L9.8 5L11 10.5L12.2 7L13.3 9.5L14.3 8H17" stroke="#e4e4e4" stroke-width="1.1" fill="none"/></svg>
<div style="left:115px;top:212px;width:90px;height:18px;background:#28292a;"></div>
<div class="t" style="left:117px;top:215px;font-size:11.5px;font-weight:bold;color:#fff;">Audio</div>
<div style="left:211px;top:211px;width:20px;height:20px;background:#4a4c4d;border-radius:2px;"></div>
<div class="c" style="left:211px;top:211px;width:20px;height:20px;line-height:20px;font-size:12px;color:#e4e4e4;">M</div>
<div style="left:235px;top:211px;width:20px;height:20px;background:#4a4c4d;border-radius:2px;"></div>
<div class="c" style="left:235px;top:211px;width:20px;height:20px;line-height:20px;font-size:12px;color:#e4e4e4;">S</div>
<div style="left:259px;top:211px;width:20px;height:20px;background:#4a4c4d;border-radius:2px;"></div>
<div style="left:264px;top:216px;width:10px;height:10px;background:#ee343b;border-radius:5px;"></div>
<div style="left:283px;top:211px;width:20px;height:20px;background:#4a4c4d;border-radius:2px;"></div>
<svg style="left:283px;top:211px;" width="20" height="20" viewBox="0 0 20 20"><circle cx="5.5" cy="10" r="1.7" fill="#dcdcdc"/><path d="M8.7 7.3Q10.2 10 8.7 12.7M11.3 5.5Q13.8 10 11.3 14.5M14 3.8Q17.3 10 14 16.2" stroke="#dcdcdc" stroke-width="1.2" fill="none"/></svg>
<svg style="left:391px;top:215px;" width="9" height="10" viewBox="0 0 9 10"><path d="M4.5 0L8.5 4H0.5ZM4.5 5.5L8.5 9.5H0.5Z" fill="#b4b4b4"/></svg>
<div style="left:114px;top:236px;width:92px;height:19px;background:#4a4c4d;border-radius:2px;"></div>
<div class="t" style="left:118px;top:240px;font-size:11px;color:#e8e8e8;">Clips</div>
<svg style="left:192px;top:242px;" width="10" height="8" viewBox="0 0 10 8"><path d="M1 1H9L5 7Z" fill="#dcdcdc"/></svg>
<div style="left:211px;top:235px;width:20px;height:20px;background:#dedede;border-radius:2px;"></div>
<div class="c" style="left:211px;top:235px;width:20px;height:20px;line-height:20px;font-size:12px;color:#e4e4e4;color:#111;">R</div>
<div style="left:235px;top:235px;width:20px;height:20px;background:#4a4c4d;border-radius:2px;"></div>
<div class="c" style="left:235px;top:235px;width:20px;height:20px;line-height:20px;font-size:12px;color:#e4e4e4;">W</div>
<div class="t" style="left:247px;top:245px;font-size:7px;color:#222;">T</div>
<div style="left:259px;top:235px;width:20px;height:20px;background:#4a4c4d;border-radius:2px;"></div>
<svg style="left:259px;top:235px;" width="20" height="20" viewBox="0 0 20 20"><path d="M10 4V16M4.8 7L15.2 13M15.2 7L4.8 13" stroke="#e8e8e8" stroke-width="1.7"/></svg>
<div style="left:283px;top:235px;width:20px;height:20px;background:#4a4c4d;border-radius:2px;"></div>
<div class="c" style="left:283px;top:235px;width:20px;height:20px;line-height:20px;font-size:12px;color:#e4e4e4;font-size:13px;">A</div>
<div style="left:307px;top:235px;width:94px;height:70px;background:#2a2b2d;border-radius:4px 4px 2px 2px;"></div>
<div style="left:307px;top:235px;width:94px;height:16px;background:#242526;border-radius:4px 4px 0 0;"></div>
<svg style="left:310px;top:237px;" width="12" height="12" viewBox="0 0 12 12"><path d="M3.5 2.8A4.5 4.5 0 1 0 8.5 2.8" stroke="#e0924a" stroke-width="1.7" fill="none"/><path d="M6 1V6.5" stroke="#e0924a" stroke-width="1.7"/></svg>
<div class="t" style="left:325px;top:238px;font-size:11.5px;color:#e8e8e8;">FX</div>
<svg style="left:388px;top:239px;" width="9" height="9" viewBox="0 0 9 9"><path d="M4.5 0.5V8.5M0.5 4.5H8.5" stroke="#b8b8b8" stroke-width="1.5"/></svg>
<div style="left:115px;top:260px;width:90px;height:18px;background:#2a2b2c;border:1px solid #1f2021;border-radius:3px;"></div>
<div class="t" style="left:117px;top:261px;font-size:11.5px;color:#7b7d7e;">Volume</div>
<div class="r" style="left:115px;top:261px;width:88px;font-size:11.5px;color:#d8d8d8;">0.0</div>
<div style="left:117px;top:272px;width:86px;height:3px;background:#5a5c5d;"></div>
<div style="left:117px;top:272px;width:68px;height:3px;background:#d4ecfa;"></div>
<div style="left:211px;top:260px;width:92px;height:18px;background:#2a2b2c;border:1px solid #1f2021;border-radius:3px;"></div>
<div class="t" style="left:213px;top:261px;font-size:11.5px;color:#7b7d7e;">Pan</div>
<div class="r" style="left:211px;top:261px;width:90px;font-size:11.5px;color:#d8d8d8;">0% C</div>
<div style="left:213px;top:272px;width:88px;height:3px;background:#5a5c5d;"></div>
<div style="left:255px;top:272px;width:4px;height:3px;background:#e8f4fc;"></div>
<div style="left:115px;top:285px;width:90px;height:18px;background:#2a2b2c;border:1px solid #1f2021;border-radius:3px;"></div>
<div class="t" style="left:117px;top:286px;font-size:11.5px;color:#7b7d7e;">Gain</div>
<div class="r" style="left:115px;top:286px;width:88px;font-size:11.5px;color:#d8d8d8;">0.0</div>
<div style="left:117px;top:297px;width:86px;height:3px;background:#5a5c5d;"></div>
<div style="left:117px;top:297px;width:42px;height:3px;background:#d4ecfa;"></div>
<div style="left:211px;top:285px;width:92px;height:19px;background:#4a4c4d;border-radius:2px;"></div>
<div style="left:214px;top:289px;width:10px;height:11px;background:#8f9192;border-radius:2px;"></div>
<div class="c" style="left:214px;top:290px;width:10px;font-size:9px;font-weight:bold;color:#3a3c3d;">I</div>
<div class="t" style="left:226px;top:289px;font-size:11px;color:#e8e8e8;">-None-</div>
<svg style="left:289px;top:291px;" width="10" height="8" viewBox="0 0 10 8"><path d="M1 1H9L5 7Z" fill="#dcdcdc"/></svg>
<div style="left:54px;top:285px;width:20px;height:20px;background:#4a4c4d;border-radius:2px;"></div>
<div style="left:78px;top:285px;width:20px;height:20px;background:#4a4c4d;border-radius:2px;"></div>
<svg style="left:54px;top:285px;" width="20" height="20" viewBox="0 0 20 20"><path d="M4 6.5H13M6.5 10H16M4 13.5H11" stroke="#e4e4e4" stroke-width="1.5"/></svg>
<svg style="left:78px;top:285px;" width="20" height="20" viewBox="0 0 20 20"><path d="M4 14L7.5 6L12.5 14L16 6" stroke="#e4e4e4" stroke-width="1.3" fill="none"/><circle cx="4" cy="14" r="1.3" fill="#e4e4e4"/><circle cx="7.5" cy="6" r="1.3" fill="#e4e4e4"/><circle cx="12.5" cy="14" r="1.3" fill="#e4e4e4"/><circle cx="16" cy="6" r="1.3" fill="#e4e4e4"/></svg>
<div style="left:407px;top:213px;width:11px;height:91px;background:#2a2b2d;"></div>
<div class="r" style="left:411px;top:222.00px;width:21px;font-size:8px;color:#a9adb8;">-6</div>
<div class="r" style="left:411px;top:230.25px;width:21px;font-size:8px;color:#a9adb8;">-12</div>
<div class="r" style="left:411px;top:238.50px;width:21px;font-size:8px;color:#a9adb8;">-18</div>
<div class="r" style="left:411px;top:246.75px;width:21px;font-size:8px;color:#a9adb8;">-24</div>
<div class="r" style="left:411px;top:255.00px;width:21px;font-size:8px;color:#a9adb8;">-30</div>
<div class="r" style="left:411px;top:263.25px;width:21px;font-size:8px;color:#a9adb8;">-36</div>
<div class="r" style="left:411px;top:271.50px;width:21px;font-size:8px;color:#a9adb8;">-42</div>
<div class="r" style="left:411px;top:279.75px;width:21px;font-size:8px;color:#a9adb8;">-48</div>
<div class="r" style="left:411px;top:288.00px;width:21px;font-size:8px;color:#a9adb8;">-54</div>
<div style="left:54px;top:312px;width:34px;height:18px;background:#dc8f4e;border-radius:1px;"></div>
<div class="c" style="left:54px;top:315px;width:34px;font-size:12px;color:#222;">2</div>
<svg style="left:92px;top:313px;" width="16" height="16" viewBox="0 0 16 16"><circle cx="8" cy="8" r="7" fill="#e8e8e8"/><circle cx="4" cy="9" r="1.1" fill="#333"/><circle cx="5.2" cy="5.5" r="1.1" fill="#333"/><circle cx="8" cy="4" r="1.1" fill="#333"/><circle cx="10.8" cy="5.5" r="1.1" fill="#333"/><circle cx="12" cy="9" r="1.1" fill="#333"/><rect x="6.5" y="13" width="3" height="3" fill="#303233"/></svg>
<div style="left:115px;top:312px;width:90px;height:18px;background:#f0bf7b;"></div>
<div class="t" style="left:117px;top:315px;font-size:11.5px;color:#111;">MIDI</div>
<div style="left:113px;top:310px;width:4px;height:1px;background:#fff;"></div>
<div style="left:113px;top:310px;width:1px;height:4px;background:#fff;"></div>
<div style="left:203px;top:310px;width:4px;height:1px;background:#fff;"></div>
<div style="left:206px;top:310px;width:1px;height:4px;background:#fff;"></div>
<div style="left:113px;top:331px;width:4px;height:1px;background:#fff;"></div>
<div style="left:113px;top:328px;width:1px;height:4px;background:#fff;"></div>
<div style="left:203px;top:331px;width:4px;height:1px;background:#fff;"></div>
<div style="left:206px;top:328px;width:1px;height:4px;background:#fff;"></div>
<div style="left:211px;top:311px;width:20px;height:20px;background:#4a4c4d;border-radius:2px;"></div>
<div class="c" style="left:211px;top:311px;width:20px;height:20px;line-height:20px;font-size:12px;color:#e4e4e4;">M</div>
<div style="left:235px;top:311px;width:20px;height:20px;background:#4a4c4d;border-radius:2px;"></div>
<div class="c" style="left:235px;top:311px;width:20px;height:20px;line-height:20px;font-size:12px;color:#e4e4e4;">S</div>
<div style="left:259px;top:311px;width:20px;height:20px;background:#4a4c4d;border-radius:2px;"></div>
<div style="left:264px;top:316px;width:10px;height:10px;background:#ee343b;border-radius:5px;"></div>
<div style="left:283px;top:311px;width:20px;height:20px;background:#dc8f4e;border-radius:2px;"></div>
<svg style="left:282px;top:310px;" width="20" height="20" viewBox="0 0 20 20"><circle cx="5.5" cy="10" r="1.7" fill="#2a2216"/><path d="M8.7 7.3Q10.2 10 8.7 12.7M11.3 5.5Q13.8 10 11.3 14.5M14 3.8Q17.3 10 14 16.2" stroke="#2a2216" stroke-width="1.2" fill="none"/></svg>
<div class="t" style="left:296px;top:322px;font-size:8.5px;color:#2a2216;">A</div>
<svg style="left:391px;top:315px;" width="9" height="10" viewBox="0 0 9 10"><path d="M4.5 0L8.5 4H0.5ZM4.5 5.5L8.5 9.5H0.5Z" fill="#b4b4b4"/></svg>
<div style="left:114px;top:336px;width:92px;height:19px;background:#4a4c4d;border-radius:2px;"></div>
<div class="t" style="left:118px;top:340px;font-size:11px;color:#e8e8e8;">Clips</div>
<svg style="left:192px;top:342px;" width="10" height="8" viewBox="0 0 10 8"><path d="M1 1H9L5 7Z" fill="#dcdcdc"/></svg>
<div style="left:211px;top:335px;width:20px;height:20px;background:#dedede;border-radius:2px;"></div>
<div class="c" style="left:211px;top:335px;width:20px;height:20px;line-height:20px;font-size:12px;color:#e4e4e4;color:#111;">R</div>
<div style="left:235px;top:335px;width:20px;height:20px;background:#4a4c4d;border-radius:2px;"></div>
<div class="c" style="left:235px;top:335px;width:20px;height:20px;line-height:20px;font-size:12px;color:#e4e4e4;">W</div>
<div class="t" style="left:247px;top:345px;font-size:7px;color:#222;">T</div>
<div style="left:259px;top:335px;width:20px;height:20px;background:#4a4c4d;border-radius:2px;"></div>
<svg style="left:259px;top:335px;" width="20" height="20" viewBox="0 0 20 20"><path d="M10 4V16M4.8 7L15.2 13M15.2 7L4.8 13" stroke="#666869" stroke-width="1.7"/></svg>
<div style="left:283px;top:335px;width:20px;height:20px;background:#4a4c4d;border-radius:2px;"></div>
<div class="c" style="left:283px;top:335px;width:20px;height:20px;line-height:20px;font-size:12px;color:#e4e4e4;font-size:13px;">A</div>
<div style="left:307px;top:335px;width:94px;height:132px;background:#2a2b2d;border-radius:4px 4px 2px 2px;"></div>
<div style="left:307px;top:335px;width:94px;height:16px;background:#242526;border-radius:4px 4px 0 0;"></div>
<svg style="left:310px;top:337px;" width="12" height="12" viewBox="0 0 12 12"><path d="M3.5 2.8A4.5 4.5 0 1 0 8.5 2.8" stroke="#e0924a" stroke-width="1.7" fill="none"/><path d="M6 1V6.5" stroke="#e0924a" stroke-width="1.7"/></svg>
<div class="t" style="left:325px;top:338px;font-size:11.5px;color:#e8e8e8;">FX</div>
<svg style="left:388px;top:339px;" width="9" height="9" viewBox="0 0 9 9"><path d="M4.5 0.5V8.5M0.5 4.5H8.5" stroke="#b8b8b8" stroke-width="1.5"/></svg>
<div style="left:60px;top:337px;width:48px;height:47px;background:#28292a;"></div>
<svg style="left:68px;top:344px;" width="32" height="36" viewBox="0 0 32 36"><circle cx="16" cy="16" r="14" fill="#e9e9e9"/><circle cx="7" cy="18.5" r="2" fill="#2b2c2d"/><circle cx="9.5" cy="11" r="2" fill="#2b2c2d"/><circle cx="16" cy="7.5" r="2" fill="#2b2c2d"/><circle cx="22.5" cy="11" r="2" fill="#2b2c2d"/><circle cx="25" cy="18.5" r="2" fill="#2b2c2d"/><path d="M12.5 31Q12.5 27.5 16 27.5T19.5 31Z" fill="#28292a"/></svg>
<div style="left:115px;top:360px;width:90px;height:18px;background:#2a2b2c;border:1px solid #1f2021;border-radius:3px;"></div>
<div class="t" style="left:117px;top:361px;font-size:11.5px;color:#7b7d7e;">Volume</div>
<div class="r" style="left:115px;top:361px;width:88px;font-size:11.5px;color:#d8d8d8;">(101)</div>
<div style="left:117px;top:372px;width:86px;height:3px;background:#5a5c5d;"></div>
<div style="left:117px;top:372px;width:68px;height:3px;background:#d4ecfa;"></div>
<div style="left:211px;top:360px;width:92px;height:18px;background:#2a2b2c;border:1px solid #1f2021;border-radius:3px;"></div>
<div class="t" style="left:213px;top:361px;font-size:11.5px;color:#7b7d7e;">Pan</div>
<div class="r" style="left:211px;top:361px;width:90px;font-size:11.5px;color:#d8d8d8;">(0% C)</div>
<div style="left:213px;top:372px;width:88px;height:3px;background:#5a5c5d;"></div>
<div style="left:255px;top:372px;width:4px;height:3px;background:#e8f4fc;"></div>
<div style="left:115px;top:385px;width:90px;height:18px;background:#2a2b2c;border:1px solid #1f2021;border-radius:3px;"></div>
<div class="t" style="left:117px;top:386px;font-size:11.5px;color:#7b7d7e;">Vel+</div>
<div class="r" style="left:115px;top:386px;width:88px;font-size:11.5px;color:#d8d8d8;">0</div>
<div style="left:117px;top:397px;width:86px;height:3px;background:#5a5c5d;"></div>
<div style="left:117px;top:397px;width:42px;height:3px;background:#d4ecfa;"></div>
<div style="left:211px;top:385px;width:92px;height:19px;background:#4a4c4d;border-radius:2px;"></div>
<div style="left:214px;top:389px;width:10px;height:11px;background:#8f9192;border-radius:2px;"></div>
<div class="c" style="left:214px;top:390px;width:10px;font-size:9px;font-weight:bold;color:#3a3c3d;">I</div>
<div class="t" style="left:226px;top:389px;font-size:11px;color:#e8e8e8;">Omni</div>
<svg style="left:289px;top:391px;" width="10" height="8" viewBox="0 0 10 8"><path d="M1 1H9L5 7Z" fill="#dcdcdc"/></svg>
<div style="left:114px;top:410px;width:92px;height:19px;background:#4a4c4d;border-radius:2px;"></div>
<div style="left:117px;top:414px;width:10px;height:11px;background:#8f9192;border-radius:2px;"></div>
<div class="c" style="left:117px;top:415px;width:10px;font-size:9px;font-weight:bold;color:#3a3c3d;">O</div>
<div class="t" style="left:129px;top:414px;font-size:11px;color:#e8e8e8;">1-</div>
<svg style="left:192px;top:416px;" width="10" height="8" viewBox="0 0 10 8"><path d="M1 1H9L5 7Z" fill="#dcdcdc"/></svg>
<div style="left:211px;top:410px;width:92px;height:19px;background:#4a4c4d;border-radius:2px;"></div>
<div style="left:214px;top:414px;width:10px;height:11px;background:#8f9192;border-radius:2px;"></div>
<div class="c" style="left:214px;top:415px;width:10px;font-size:9px;font-weight:bold;color:#3a3c3d;">C</div>
<div class="t" style="left:226px;top:414px;font-size:11px;color:#e8e8e8;">1SndFnt...</div>
<svg style="left:289px;top:416px;" width="10" height="8" viewBox="0 0 10 8"><path d="M1 1H9L5 7Z" fill="#dcdcdc"/></svg>
<div style="left:114px;top:435px;width:92px;height:19px;background:#4a4c4d;border-radius:2px;"></div>
<div style="left:117px;top:439px;width:10px;height:11px;background:#8f9192;border-radius:2px;"></div>
<div class="c" style="left:117px;top:440px;width:10px;font-size:9px;font-weight:bold;color:#3a3c3d;">B</div>
<div class="t" style="left:129px;top:439px;font-size:11px;color:#e8e8e8;">None</div>
<svg style="left:192px;top:441px;" width="10" height="8" viewBox="0 0 10 8"><path d="M1 1H9L5 7Z" fill="#dcdcdc"/></svg>
<div style="left:211px;top:435px;width:92px;height:19px;background:#4a4c4d;border-radius:2px;"></div>
<div style="left:214px;top:439px;width:10px;height:11px;background:#8f9192;border-radius:2px;"></div>
<div class="c" style="left:214px;top:440px;width:10px;font-size:9px;font-weight:bold;color:#3a3c3d;">P</div>
<div class="t" style="left:226px;top:439px;font-size:11px;color:#e8e8e8;">AcstcGrndP</div>
<svg style="left:289px;top:441px;" width="10" height="8" viewBox="0 0 10 8"><path d="M1 1H9L5 7Z" fill="#dcdcdc"/></svg>
<div style="left:407px;top:313px;width:11px;height:155px;background:#2b2c2e;"></div>
<div style="left:420px;top:475px;width:20px;height:20px;background:#2b2c2d;border-radius:2px;"></div>
<svg style="left:420px;top:475px;" width="20" height="20" viewBox="0 0 20 20"><path d="M10 5.5L14.5 10.5H5.5Z" fill="#e8e8e8"/><rect x="5.5" y="12" width="9" height="2.2" fill="#e8e8e8"/></svg>
<div style="left:442px;top:309px;width:18px;height:1px;background:#9c9e9f;"></div>
<div style="left:442px;top:340px;width:18px;height:1px;background:#76787a;"></div>
<div class="r" style="left:437px;top:343.2px;width:19px;font-size:8.5px;color:#7d7f80;">120</div>
<div style="left:442px;top:359px;width:18px;height:1px;background:#76787a;"></div>
<div class="r" style="left:437px;top:362.4px;width:19px;font-size:8.5px;color:#7d7f80;">108</div>
<div style="left:442px;top:378px;width:18px;height:1px;background:#76787a;"></div>
<div class="r" style="left:437px;top:381.7px;width:19px;font-size:8.5px;color:#7d7f80;">96</div>
<div style="left:442px;top:397px;width:18px;height:1px;background:#76787a;"></div>
<div class="r" style="left:437px;top:400.9px;width:19px;font-size:8.5px;color:#7d7f80;">84</div>
<div style="left:442px;top:417px;width:18px;height:1px;background:#76787a;"></div>
<div class="r" style="left:437px;top:420.1px;width:19px;font-size:8.5px;color:#7d7f80;">72</div>
<div style="left:442px;top:436px;width:18px;height:1px;background:#76787a;"></div>
<div class="r" style="left:437px;top:439.4px;width:19px;font-size:8.5px;color:#7d7f80;">60</div>
<div style="left:442px;top:455px;width:18px;height:1px;background:#76787a;"></div>
<div class="r" style="left:440px;top:234px;width:16px;font-size:8px;color:#76787a;">-3</div>
<div class="r" style="left:440px;top:240.5px;width:16px;font-size:8px;color:#76787a;">-6</div>
<div class="r" style="left:440px;top:247.5px;width:16px;font-size:8px;color:#76787a;">-9</div>
<div class="r" style="left:440px;top:278px;width:16px;font-size:8px;color:#76787a;">-9</div>
<div class="r" style="left:440px;top:285px;width:16px;font-size:8px;color:#76787a;">-6</div>
<div class="r" style="left:440px;top:291.5px;width:16px;font-size:8px;color:#76787a;">-3</div>
<div class="t" style="left:445px;top:262px;font-size:8.5px;color:#76787a;">dB</div>
<div style="left:456px;top:267px;width:3px;height:1px;background:#111;"></div>
<div style="left:463px;top:160px;width:1157px;height:31px;background:#3c3e3f;border-top:1px solid #8d8f90;border-bottom:1px solid #8d8f90;border-right:1px solid #8d8f90;"></div>
<svg style="left:463px;top:160px;" width="1156" height="31" viewBox="0 0 1156 31"><rect x="0" y="10" width="691.5" height="15" fill="#cdcac7"/><path d="M0 10H691.5V24L681.5 13.5H11L0 24Z" fill="#3db46f"/><path d="M691.5 24.5H1156" stroke="#a8aaab" stroke-width="1"/><path d="M0.5 20.5V24.5M21.5 20.5V24.5M41.5 20.5V24.5M62.5 20.5V24.5M83.5 20.5V24.5M103.5 20.5V24.5M124.5 20.5V24.5M144.5 20.5V24.5M165.5 20.5V24.5M186.5 20.5V24.5M206.5 20.5V24.5M227.5 20.5V24.5M248.5 20.5V24.5M268.5 20.5V24.5M289.5 20.5V24.5M309.5 20.5V24.5M330.5 20.5V24.5M351.5 20.5V24.5M371.5 20.5V24.5M392.5 20.5V24.5M413.5 20.5V24.5M433.5 20.5V24.5M454.5 20.5V24.5M474.5 20.5V24.5M495.5 20.5V24.5M516.5 20.5V24.5M536.5 20.5V24.5M557.5 20.5V24.5M578.5 20.5V24.5M598.5 20.5V24.5M619.5 20.5V24.5M639.5 20.5V24.5M660.5 20.5V24.5M681.5 20.5V24.5" stroke="#777" stroke-width="1"/><path d="M701.5 20.5V24.5M722.5 20.5V24.5M743.5 20.5V24.5M763.5 20.5V24.5M784.5 20.5V24.5M804.5 20.5V24.5M825.5 20.5V24.5M846.5 20.5V24.5M866.5 20.5V24.5M887.5 20.5V24.5M908.5 20.5V24.5M928.5 20.5V24.5M949.5 20.5V24.5M969.5 20.5V24.5M990.5 20.5V24.5M1011.5 20.5V24.5M1031.5 20.5V24.5M1052.5 20.5V24.5M1073.5 20.5V24.5M1093.5 20.5V24.5M1114.5 20.5V24.5M1134.5 20.5V24.5M1155.5 20.5V24.5" stroke="#a8aaab" stroke-width="1"/><text x="3.5" y="21" font-size="9.5" fill="#3a3a3a" font-family="Liberation Sans, sans-serif">1</text><text x="86.0" y="21" font-size="9.5" fill="#3a3a3a" font-family="Liberation Sans, sans-serif">2</text><text x="168.5" y="21" font-size="9.5" fill="#3a3a3a" font-family="Liberation Sans, sans-serif">3</text><text x="251.0" y="21" font-size="9.5" fill="#3a3a3a" font-family="Liberation Sans, sans-serif">4</text><text x="333.5" y="21" font-size="9.5" fill="#3a3a3a" font-family="Liberation Sans, sans-serif">5</text><text x="416.0" y="21" font-size="9.5" fill="#3a3a3a" font-family="Liberation Sans, sans-serif">6</text><text x="498.5" y="21" font-size="9.5" fill="#3a3a3a" font-family="Liberation Sans, sans-serif">7</text><text x="581.0" y="21" font-size="9.5" fill="#3a3a3a" font-family="Liberation Sans, sans-serif">8</text><text x="663.5" y="21" font-size="9.5" fill="#3a3a3a" font-family="Liberation Sans, sans-serif">9</text><text x="746.0" y="21" font-size="9.5" fill="#c4c6c7" font-family="Liberation Sans, sans-serif">10</text><text x="828.5" y="21" font-size="9.5" fill="#c4c6c7" font-family="Liberation Sans, sans-serif">11</text><text x="911.0" y="21" font-size="9.5" fill="#c4c6c7" font-family="Liberation Sans, sans-serif">12</text><text x="993.5" y="21" font-size="9.5" fill="#c4c6c7" font-family="Liberation Sans, sans-serif">13</text><text x="1076.0" y="21" font-size="9.5" fill="#c4c6c7" font-family="Liberation Sans, sans-serif">14</text></svg>
<div style="left:1622px;top:176px;width:14px;height:14px;background:#393b3c;"></div>
<svg style="left:1623px;top:177px;" width="12" height="12" viewBox="0 0 12 12"><path d="M6 1V11M1 6H11" stroke="#e8e8e8" stroke-width="2"/></svg>
<svg style="left:463px;top:209px;" width="1156" height="259" viewBox="0 0 1156 259"><rect x="0" y="0" width="1156" height="259" fill="#37383a"/><rect x="0" y="101" width="35" height="158" fill="#2b2c2e"/><rect x="35" y="101" width="656" height="158" fill="#57575b"/><rect x="35" y="101" width="656" height="17" fill="#cacace"/><rect x="35" y="118" width="656" height="1" fill="#ececec"/><path d="M54.5 259.0L61.0 250.0L68.7 241.0L75.0 235.0L82.0 230.5L89.0 226.5L97.0 224.0L105.0 222.0L130.0 222.0L137.0 225.0L143.7 231.0L150.3 240.0L155.0 248.0L158.0 254.0L160.3 259.0Z" fill="#e2704a"/><path d="M286.0 259.0L294.0 253.0L302.0 247.0L307.0 244.3L317.0 242.7L321.0 239.0L325.3 236.8L332.0 234.0L340.0 231.0L347.0 227.5L353.7 224.3L360.0 222.0L367.0 219.7L375.0 218.0L383.7 216.8L389.0 218.5L393.7 221.0L399.0 224.5L403.7 229.3L407.0 234.0L410.3 239.3L414.0 246.0L417.0 252.7L421.0 259.0Z" fill="#e2704a"/><path d="M542.8 259.0L548.0 252.0L553.7 244.3L558.0 237.0L561.0 232.0L563.7 227.7L570.3 222.7L577.0 220.8L583.7 219.3L591.0 217.5L598.7 215.7L609.0 216.5L620.3 218.0L629.0 220.5L638.7 224.3L645.0 228.5L652.0 234.3L660.3 239.3L665.3 247.7L668.0 253.0L671.0 259.0Z" fill="#e2704a"/><path d="M10.5 0V259M30.5 0V259M51.5 0V259M71.5 0V259M92.5 0V259M113.5 0V259M133.5 0V259M154.5 0V259M175.5 0V259M195.5 0V259M216.5 0V259M236.5 0V259M257.5 0V259M278.5 0V259M298.5 0V259M319.5 0V259M340.5 0V259M360.5 0V259M381.5 0V259M401.5 0V259M422.5 0V259M443.5 0V259M463.5 0V259M484.5 0V259M505.5 0V259M525.5 0V259M546.5 0V259M566.5 0V259M587.5 0V259M608.5 0V259M628.5 0V259M649.5 0V259M670.5 0V259M690.5 0V259M711.5 0V259M731.5 0V259M752.5 0V259M773.5 0V259M793.5 0V259M814.5 0V259M835.5 0V259M855.5 0V259M876.5 0V259M896.5 0V259M917.5 0V259M938.5 0V259M958.5 0V259M979.5 0V259M1000.5 0V259M1020.5 0V259M1041.5 0V259M1061.5 0V259M1082.5 0V259M1103.5 0V259M1123.5 0V259M1144.5 0V259" stroke="#000" stroke-opacity="0.13" stroke-width="1"/><path d="M20.5 0V259M41.5 0V259M61.5 0V259M102.5 0V259M123.5 0V259M144.5 0V259M185.5 0V259M206.5 0V259M226.5 0V259M267.5 0V259M288.5 0V259M309.5 0V259M350.5 0V259M371.5 0V259M391.5 0V259M432.5 0V259M453.5 0V259M474.5 0V259M515.5 0V259M536.5 0V259M556.5 0V259M597.5 0V259M618.5 0V259M639.5 0V259M680.5 0V259M701.5 0V259M721.5 0V259M762.5 0V259M783.5 0V259M804.5 0V259M845.5 0V259M866.5 0V259M886.5 0V259M927.5 0V259M948.5 0V259M969.5 0V259M1010.5 0V259M1031.5 0V259M1051.5 0V259M1092.5 0V259M1113.5 0V259M1134.5 0V259" stroke="#000" stroke-opacity="0.26" stroke-width="1"/><clipPath id="ch1"><path d="M54.5 259.0L61.0 250.0L68.7 241.0L75.0 235.0L82.0 230.5L89.0 226.5L97.0 224.0L105.0 222.0L130.0 222.0L137.0 225.0L143.7 231.0L150.3 240.0L155.0 248.0L158.0 254.0L160.3 259.0Z"/></clipPath><clipPath id="ch2"><path d="M286.0 259.0L294.0 253.0L302.0 247.0L307.0 244.3L317.0 242.7L321.0 239.0L325.3 236.8L332.0 234.0L340.0 231.0L347.0 227.5L353.7 224.3L360.0 222.0L367.0 219.7L375.0 218.0L383.7 216.8L389.0 218.5L393.7 221.0L399.0 224.5L403.7 229.3L407.0 234.0L410.3 239.3L414.0 246.0L417.0 252.7L421.0 259.0Z"/></clipPath><clipPath id="ch3"><path d="M542.8 259.0L548.0 252.0L553.7 244.3L558.0 237.0L561.0 232.0L563.7 227.7L570.3 222.7L577.0 220.8L583.7 219.3L591.0 217.5L598.7 215.7L609.0 216.5L620.3 218.0L629.0 220.5L638.7 224.3L645.0 228.5L652.0 234.3L660.3 239.3L665.3 247.7L668.0 253.0L671.0 259.0Z"/></clipPath><path d="M100.5 219V259M107.5 219V259M109.5 219V259M111.5 219V259M113.5 219V259M115.5 219V259M117.5 219V259M119.5 219V259M121.5 219V259M123.5 219V259M125.5 219V259M127.5 219V259" stroke="#93422c" stroke-width="1" shape-rendering="crispEdges" clip-path="url(#ch1)"/><path d="M318.5 215V259M358.5 215V259M365.5 215V259M372.5 215V259M375.5 215V259M382.5 215V259" stroke="#6b5655" stroke-width="1" shape-rendering="crispEdges" clip-path="url(#ch2)"/><path d="M356 215V259" stroke="#625556" stroke-width="2" clip-path="url(#ch2)"/><path d="M592.5 211V259M597.5 211V259" stroke="#6b5655" stroke-width="1" shape-rendering="crispEdges" clip-path="url(#ch3)"/><path d="M586 211V259M602 211V259" stroke="#625556" stroke-width="2" clip-path="url(#ch3)"/><path d="M39.0 235.5H59.0M154.0 218.0H175.0M212.0 223.5H232.0M226.0 234.3H247.0M276.0 241.3H297.0M307.0 232.0H333.0M307.0 234.5H327.0M418.0 221.5H438.7M465.0 227.3H486.0M509.0 242.3H530.0M642.0 224.3H658.7" stroke="#e2704a" stroke-width="1"/><path d="M0.5 0V259M82.5 0V259M164.5 0V259M247.5 0V259M329.5 0V259M412.5 0V259M494.5 0V259M577.5 0V259M659.5 0V259M742.5 0V259M824.5 0V259M907.5 0V259M989.5 0V259M1072.5 0V259M1154.5 0V259" stroke="#0e0e0f" stroke-width="1"/><rect x="0" y="99" width="1156" height="1.5" fill="#0c0c0d"/><rect x="691" y="100.5" width="465" height="1" fill="#4a4b4d"/><path d="M678.5 104.5H682M683 104.5H686M684.5 107.5H689M678.5 112H682" stroke="#111" stroke-width="1.6"/></svg>
<div style="left:463px;top:472px;width:1176px;height:2px;background:#0a0a0b;"></div>
<div style="left:1637px;top:472px;width:2px;height:4px;background:#0a0a0b;"></div>
<div style="left:462px;top:170px;width:1.3px;height:304px;background:#f4f4f4;"></div>
<svg style="left:451px;top:156px;" width="24" height="16" viewBox="0 0 24 16"><path d="M2 1H22Q23 1 23 2V9Q23 10.5 21 11L14 13L12 15.5L10 13L3 11Q1 10.5 1 9V2Q1 1 2 1Z" fill="url(#nm)" stroke="#8a8e92" stroke-width="0.6"/><defs><linearGradient id="nm" x1="0" y1="0" x2="0" y2="1"><stop offset="0" stop-color="#e4e6e8"/><stop offset="1" stop-color="#9aa0a6"/></linearGradient></defs><rect x="8.5" y="3.5" width="7" height="7" fill="#2a2b2c"/></svg>
<svg style="left:1624px;top:212px;" width="10" height="8" viewBox="0 0 10 8"><path d="M5 1L9.5 7H0.5Z" fill="#2c2d2e"/></svg>
<div style="left:1623px;top:225px;width:12px;height:110px;background:#c9c9c9;border-radius:1px;"></div>
<svg style="left:1624px;top:414px;" width="10" height="8" viewBox="0 0 10 8"><path d="M5 7L9.5 1H0.5Z" fill="#2c2d2e"/></svg>
<svg style="left:1623px;top:428px;" width="14" height="14" viewBox="0 0 14 14"><circle cx="5.5" cy="5.5" r="4" stroke="#f0f0f0" stroke-width="1.4" fill="none"/><path d="M3.3 5.5H7.7" stroke="#f0f0f0" stroke-width="1.3"/><path d="M8.5 8.5L13 13" stroke="#f0f0f0" stroke-width="2"/></svg>
<div style="left:1623px;top:444px;width:10px;height:6px;background:#d8d8d8;"></div>
<svg style="left:1623px;top:453px;" width="14" height="14" viewBox="0 0 14 14"><circle cx="5.5" cy="5.5" r="4" stroke="#f0f0f0" stroke-width="1.4" fill="none"/><path d="M3.3 5.5H7.7" stroke="#f0f0f0" stroke-width="1.3"/><path d="M5.5 3.3V7.7" stroke="#f0f0f0" stroke-width="1.3"/><path d="M8.5 8.5L13 13" stroke="#f0f0f0" stroke-width="2"/></svg>
<svg style="left:468px;top:479px;" width="8" height="10" viewBox="0 0 8 10"><path d="M7 1V9L1 5Z" fill="#2c2d2e"/></svg>
<div style="left:482px;top:476px;width:15px;height:16px;background:#c9c9c9;"></div>
<svg style="left:1559px;top:479px;" width="8" height="10" viewBox="0 0 8 10"><path d="M1 1V9L7 5Z" fill="#2c2d2e"/></svg>
<svg style="left:1576px;top:477px;" width="14" height="14" viewBox="0 0 14 14"><circle cx="5.5" cy="5.5" r="4" stroke="#f0f0f0" stroke-width="1.4" fill="none"/><path d="M3.3 5.5H7.7" stroke="#f0f0f0" stroke-width="1.3"/><path d="M8.5 8.5L13 13" stroke="#f0f0f0" stroke-width="2"/></svg>
<div style="left:1594px;top:478px;width:6px;height:14px;background:#3a3c3d;"></div>
<div style="left:1594px;top:487px;width:6px;height:5px;background:#d8d8d8;"></div>
<svg style="left:1604px;top:477px;" width="14" height="14" viewBox="0 0 14 14"><circle cx="5.5" cy="5.5" r="4" stroke="#f0f0f0" stroke-width="1.4" fill="none"/><path d="M3.3 5.5H7.7" stroke="#f0f0f0" stroke-width="1.3"/><path d="M5.5 3.3V7.7" stroke="#f0f0f0" stroke-width="1.3"/><path d="M8.5 8.5L13 13" stroke="#f0f0f0" stroke-width="2"/></svg>
<div style="left:1645px;top:136px;width:24px;height:361px;background:#3c3e3f;border-radius:5px;"></div>
<div style="left:1645px;top:154px;width:24px;height:1px;background:#e8e8e8;"></div>
<svg style="left:1650px;top:139px;" width="16" height="12" viewBox="0 0 16 12"><path d="M7.5 2L2.5 6L7.5 10ZM14 2L9 6L14 10Z" fill="#e0e0e0"/></svg>
<svg style="left:1649px;top:159px;" width="18" height="16" viewBox="0 0 18 16"><path d="M1 3H6L8 5H16V14H1Z" fill="#5e6061"/></svg>
<svg style="left:1649px;top:183px;" width="18" height="16" viewBox="0 0 18 16"><path d="M3 13L13 3L15 5L6 14Z" fill="#5e6061"/><path d="M2 14Q6 8 10 12T16 9" stroke="#5e6061" stroke-width="1.2" fill="none"/></svg>
<svg style="left:1649px;top:207px;" width="18" height="16" viewBox="0 0 18 16"><path d="M2 3H12V14H2Z" fill="#5e6061"/><path d="M9 10L15 2" stroke="#5e6061" stroke-width="2"/><path d="M4 6H10M4 8.5H10M4 11H8" stroke="#3c3e3f" stroke-width="1"/></svg>
<div class="t" style="left:1652px;top:228px;font-size:19px;font-weight:bold;color:#5e6061;">?</div>
<div class="t" style="left:1651px;top:490px;transform-origin:0 0;transform:rotate(-90deg);font-size:12px;font-weight:bold;color:#d4d4d4;letter-spacing:-0.1px;">BROWSER&nbsp; |&nbsp; HELP MODULE</div>
<div style="left:39px;top:502px;width:1630px;height:480px;background:#4b4d4e;border-radius:5px 5px 0 0;"></div>
<div style="left:39px;top:502px;width:1630px;height:20px;background:linear-gradient(#5f6162,#4b4d4e);border-radius:5px 5px 0 0;"></div>
<div style="left:45px;top:502px;width:22px;height:19px;background:linear-gradient(#5f6162,#4f5152);border:1px solid #3a3c3d;border-top-color:#6c6e6f;"></div>
<div style="left:67px;top:502px;width:22px;height:19px;background:linear-gradient(#5f6162,#4f5152);border:1px solid #3a3c3d;border-top-color:#6c6e6f;"></div>
<div style="left:89px;top:502px;width:60px;height:19px;background:linear-gradient(#5f6162,#4f5152);border:1px solid #3a3c3d;border-top-color:#6c6e6f;"></div>
<div style="left:149px;top:502px;width:60px;height:19px;background:linear-gradient(#5f6162,#4f5152);border:1px solid #3a3c3d;border-top-color:#6c6e6f;"></div>
<svg style="left:45px;top:502px;" width="22" height="19" viewBox="0 0 22 19"><path d="M11 5V14M6.5 9.5H15.5" stroke="#d4d4d4" stroke-width="1.7"/></svg>
<svg style="left:67px;top:502px;" width="22" height="19" viewBox="0 0 22 19"><path d="M6.5 9.5H15.5" stroke="#d4d4d4" stroke-width="1.7"/></svg>
<div class="t" style="left:98px;top:505px;font-size:12px;color:#d0d2d3;">View</div>
<div class="t" style="left:153px;top:505px;font-size:12px;color:#d0d2d3;">Tracks</div>
<svg style="left:135px;top:509px;" width="8" height="5" viewBox="0 0 8 5"><path d="M0.5 0.5H7.5L4 4.5Z" fill="#d0d2d3"/></svg>
<svg style="left:195px;top:509px;" width="8" height="5" viewBox="0 0 8 5"><path d="M0.5 0.5H7.5L4 4.5Z" fill="#d0d2d3"/></svg>
<div style="left:39px;top:522px;width:1630px;height:16px;background:#424445;border-top:1px solid #b4b6b7;border-bottom:2px solid #a9abac;"></div>
<div style="left:56px;top:523px;width:1px;height:14px;background:#d8d8d8;"></div>
<div style="left:289px;top:523px;width:1px;height:14px;background:#d8d8d8;"></div>
<div style="left:368px;top:523px;width:1px;height:14px;background:#d8d8d8;"></div>
<div style="left:614px;top:523px;width:1px;height:14px;background:#d8d8d8;"></div>
<div style="left:680px;top:523px;width:1px;height:14px;background:#d8d8d8;"></div>
<div class="c" style="left:57px;top:524px;width:40px;font-size:11px;color:#c4c6c7;">Trk</div>
<div class="c" style="left:290px;top:524px;width:78px;font-size:11px;color:#c4c6c7;">Kind</div>
<div class="c" style="left:369px;top:524px;width:245px;font-size:11px;color:#c4c6c7;">Data</div>
<div style="left:40px;top:538px;width:1610px;height:424px;background:#e4e4e6 repeating-linear-gradient(180deg,transparent 0,transparent 12px,#c9c9cb 12px,#c9c9cb 13px);background-position:0 1px;"></div>
<div style="left:41px;top:538px;width:18px;height:424px;background:#000 repeating-linear-gradient(180deg,transparent 0,transparent 12px,#c9c9cb 12px,#c9c9cb 13px);background-position:0 1px;"></div>
<div style="left:59px;top:551px;width:30px;height:1px;background:#b01818;"></div>
<div style="left:57px;top:539px;width:2px;height:12px;background:repeating-linear-gradient(180deg,#4ad8e0 0,#4ad8e0 1px,#e4e4e6 1px,#e4e4e6 2px);"></div>
<div style="left:40px;top:538px;width:1610px;height:424px;overflow:hidden;"><div class="t" style="left:242px;top:3px;font-size:11px;color:#8c9bb2;">2</div><div class="t" style="left:258px;top:3px;font-size:11px;color:#8c9bb2;">Wheel</div><div class="r" style="left:500px;top:3px;width:72px;font-size:11px;color:#8c9bb2;">-7846</div><div class="t" style="left:242px;top:16px;font-size:11px;color:#8c9bb2;">2</div><div class="t" style="left:258px;top:16px;font-size:11px;color:#8c9bb2;">Wheel</div><div class="r" style="left:500px;top:16px;width:72px;font-size:11px;color:#8c9bb2;">-7717</div><div class="t" style="left:242px;top:29px;font-size:11px;color:#8c9bb2;">2</div><div class="t" style="left:258px;top:29px;font-size:11px;color:#8c9bb2;">Wheel</div><div class="r" style="left:500px;top:29px;width:72px;font-size:11px;color:#8c9bb2;">-7599</div><div class="t" style="left:242px;top:42px;font-size:11px;color:#8c9bb2;">2</div><div class="t" style="left:258px;top:42px;font-size:11px;color:#8c9bb2;">Wheel</div><div class="r" style="left:500px;top:42px;width:72px;font-size:11px;color:#8c9bb2;">-7480</div><div class="t" style="left:242px;top:55px;font-size:11px;color:#8c9bb2;">2</div><div class="t" style="left:258px;top:55px;font-size:11px;color:#8c9bb2;">Wheel</div><div class="r" style="left:500px;top:55px;width:72px;font-size:11px;color:#8c9bb2;">-7362</div><div class="t" style="left:242px;top:68px;font-size:11px;color:#8c9bb2;">2</div><div class="t" style="left:258px;top:68px;font-size:11px;color:#8c9bb2;">Wheel</div><div class="r" style="left:500px;top:68px;width:72px;font-size:11px;color:#8c9bb2;">-7265</div><div class="t" style="left:242px;top:81px;font-size:11px;color:#8c9bb2;">2</div><div class="t" style="left:258px;top:81px;font-size:11px;color:#8c9bb2;">Wheel</div><div class="r" style="left:500px;top:81px;width:72px;font-size:11px;color:#8c9bb2;">-7168</div><div class="t" style="left:242px;top:94px;font-size:11px;color:#8c9bb2;">2</div><div class="t" style="left:258px;top:94px;font-size:11px;color:#8c9bb2;">Wheel</div><div class="r" style="left:500px;top:94px;width:72px;font-size:11px;color:#8c9bb2;">-7107</div><div class="t" style="left:242px;top:107px;font-size:11px;color:#8c9bb2;">2</div><div class="t" style="left:258px;top:107px;font-size:11px;color:#8c9bb2;">Wheel</div><div class="r" style="left:500px;top:107px;width:72px;font-size:11px;color:#8c9bb2;">-7046</div><div class="t" style="left:242px;top:120px;font-size:11px;color:#8c9bb2;">2</div><div class="t" style="left:258px;top:120px;font-size:11px;color:#8c9bb2;">Wheel</div><div class="r" style="left:500px;top:120px;width:72px;font-size:11px;color:#8c9bb2;">-6982</div><div class="t" style="left:242px;top:133px;font-size:11px;color:#8c9bb2;">2</div><div class="t" style="left:258px;top:133px;font-size:11px;color:#8c9bb2;">Wheel</div><div class="r" style="left:500px;top:133px;width:72px;font-size:11px;color:#8c9bb2;">-6918</div><div class="t" style="left:242px;top:146px;font-size:11px;color:#8c9bb2;">2</div><div class="t" style="left:258px;top:146px;font-size:11px;color:#8c9bb2;">Wheel</div><div class="r" style="left:500px;top:146px;width:72px;font-size:11px;color:#8c9bb2;">-6854</div><div class="t" style="left:242px;top:159px;font-size:11px;color:#111;">1</div><div class="t" style="left:258px;top:159px;font-size:11px;color:#111;">Note</div><div class="t" style="left:336px;top:159px;font-size:11px;color:#111;">Bb3</div><div class="r" style="left:600px;top:159px;width:39px;font-size:11px;color:#111;">100</div><div class="t" style="left:857px;top:159px;font-size:11px;color:#111;">1:000</div><div class="t" style="left:242px;top:172px;font-size:11px;color:#8c9bb2;">2</div><div class="t" style="left:258px;top:172px;font-size:11px;color:#8c9bb2;">Wheel</div><div class="r" style="left:500px;top:172px;width:72px;font-size:11px;color:#8c9bb2;">-6790</div><div class="t" style="left:242px;top:185px;font-size:11px;color:#8c9bb2;">2</div><div class="t" style="left:258px;top:185px;font-size:11px;color:#8c9bb2;">Wheel</div><div class="r" style="left:500px;top:185px;width:72px;font-size:11px;color:#8c9bb2;">-6711</div><div class="t" style="left:242px;top:198px;font-size:11px;color:#8c9bb2;">2</div><div class="t" style="left:258px;top:198px;font-size:11px;color:#8c9bb2;">Wheel</div><div class="r" style="left:500px;top:198px;width:72px;font-size:11px;color:#8c9bb2;">-6632</div><div class="t" style="left:242px;top:211px;font-size:11px;color:#8c9bb2;">2</div><div class="t" style="left:258px;top:211px;font-size:11px;color:#8c9bb2;">Wheel</div><div class="r" style="left:500px;top:211px;width:72px;font-size:11px;color:#8c9bb2;">-6520</div><div class="t" style="left:242px;top:224px;font-size:11px;color:#8c9bb2;">2</div><div class="t" style="left:258px;top:224px;font-size:11px;color:#8c9bb2;">Wheel</div><div class="r" style="left:500px;top:224px;width:72px;font-size:11px;color:#8c9bb2;">-6407</div><div class="t" style="left:242px;top:237px;font-size:11px;color:#8c9bb2;">2</div><div class="t" style="left:258px;top:237px;font-size:11px;color:#8c9bb2;">Wheel</div><div class="r" style="left:500px;top:237px;width:72px;font-size:11px;color:#8c9bb2;">-6341</div><div class="t" style="left:242px;top:250px;font-size:11px;color:#8c9bb2;">2</div><div class="t" style="left:258px;top:250px;font-size:11px;color:#8c9bb2;">Wheel</div><div class="r" style="left:500px;top:250px;width:72px;font-size:11px;color:#8c9bb2;">-6275</div><div class="t" style="left:242px;top:263px;font-size:11px;color:#8c9bb2;">2</div><div class="t" style="left:258px;top:263px;font-size:11px;color:#8c9bb2;">Wheel</div><div class="r" style="left:500px;top:263px;width:72px;font-size:11px;color:#8c9bb2;">-6210</div><div class="t" style="left:242px;top:276px;font-size:11px;color:#8c9bb2;">2</div><div class="t" style="left:258px;top:276px;font-size:11px;color:#8c9bb2;">Wheel</div><div class="r" style="left:500px;top:276px;width:72px;font-size:11px;color:#8c9bb2;">-6145</div><div class="t" style="left:242px;top:289px;font-size:11px;color:#8c9bb2;">2</div><div class="t" style="left:258px;top:289px;font-size:11px;color:#8c9bb2;">Wheel</div><div class="r" style="left:500px;top:289px;width:72px;font-size:11px;color:#8c9bb2;">-6080</div><div class="t" style="left:242px;top:302px;font-size:11px;color:#8c9bb2;">2</div><div class="t" style="left:258px;top:302px;font-size:11px;color:#8c9bb2;">Wheel</div><div class="r" style="left:500px;top:302px;width:72px;font-size:11px;color:#8c9bb2;">-6015</div><div class="t" style="left:242px;top:315px;font-size:11px;color:#8c9bb2;">2</div><div class="t" style="left:258px;top:315px;font-size:11px;color:#8c9bb2;">Wheel</div><div class="r" style="left:500px;top:315px;width:72px;font-size:11px;color:#8c9bb2;">-5936</div><div class="t" style="left:242px;top:328px;font-size:11px;color:#8c9bb2;">2</div><div class="t" style="left:258px;top:328px;font-size:11px;color:#8c9bb2;">Wheel</div><div class="r" style="left:500px;top:328px;width:72px;font-size:11px;color:#8c9bb2;">-5857</div><div class="t" style="left:242px;top:341px;font-size:11px;color:#8c9bb2;">2</div><div class="t" style="left:258px;top:341px;font-size:11px;color:#8c9bb2;">Wheel</div><div class="r" style="left:500px;top:341px;width:72px;font-size:11px;color:#8c9bb2;">-5773</div><div class="t" style="left:242px;top:354px;font-size:11px;color:#8c9bb2;">2</div><div class="t" style="left:258px;top:354px;font-size:11px;color:#8c9bb2;">Wheel</div><div class="r" style="left:500px;top:354px;width:72px;font-size:11px;color:#8c9bb2;">-5689</div><div class="t" style="left:242px;top:367px;font-size:11px;color:#8c9bb2;">2</div><div class="t" style="left:258px;top:367px;font-size:11px;color:#8c9bb2;">Wheel</div><div class="r" style="left:500px;top:367px;width:72px;font-size:11px;color:#8c9bb2;">-5625</div><div class="t" style="left:242px;top:380px;font-size:11px;color:#8c9bb2;">2</div><div class="t" style="left:258px;top:380px;font-size:11px;color:#8c9bb2;">Wheel</div><div class="r" style="left:500px;top:380px;width:72px;font-size:11px;color:#8c9bb2;">-5561</div><div class="t" style="left:242px;top:393px;font-size:11px;color:#8c9bb2;">2</div><div class="t" style="left:258px;top:393px;font-size:11px;color:#8c9bb2;">Wheel</div><div class="r" style="left:500px;top:393px;width:72px;font-size:11px;color:#8c9bb2;">-5497</div><div class="t" style="left:242px;top:406px;font-size:11px;color:#8c9bb2;">2</div><div class="t" style="left:258px;top:406px;font-size:11px;color:#8c9bb2;">Wheel</div><div class="r" style="left:500px;top:406px;width:72px;font-size:11px;color:#8c9bb2;">-5415</div><div class="t" style="left:242px;top:419px;font-size:11px;color:#8c9bb2;">2</div><div class="t" style="left:258px;top:419px;font-size:11px;color:#8c9bb2;">Wheel</div><div class="r" style="left:500px;top:419px;width:72px;font-size:11px;color:#8c9bb2;">-5333</div></div>
<div style="left:1650px;top:538px;width:18px;height:424px;background:#f0f0f0;"></div>
<svg style="left:1654px;top:545px;" width="10" height="7" viewBox="0 0 10 7"><path d="M1 6L5 2L9 6" stroke="#444" stroke-width="1.8" fill="none"/></svg>
<div style="left:1651px;top:556px;width:16px;height:17px;background:#cdcdcd;"></div>
<svg style="left:1654px;top:950px;" width="10" height="7" viewBox="0 0 10 7"><path d="M1 1L5 5L9 1" stroke="#444" stroke-width="1.8" fill="none"/></svg>
<div style="left:40px;top:962px;width:1628px;height:19px;background:#f0f0f0;"></div>
<svg style="left:45px;top:965px;" width="8" height="11" viewBox="0 0 8 11"><path d="M6.5 1L2 5.5L6.5 10" stroke="#444" stroke-width="1.8" fill="none"/></svg>
<div style="left:58px;top:963px;width:17px;height:16px;background:#cdcdcd;"></div>
<svg style="left:1637px;top:965px;" width="8" height="11" viewBox="0 0 8 11"><path d="M1.5 1L6 5.5L1.5 10" stroke="#444" stroke-width="1.8" fill="none"/></svg>
<div style="left:39px;top:986px;width:1630px;height:18px;background:#4a4c4d;border-radius:0 0 6px 6px;"></div>
<div style="left:40px;top:986px;width:81px;height:18px;background:#3b3d3e;border-radius:0 0 5px 5px;"></div>
<div style="left:121px;top:986px;width:3px;height:18px;background:#2c2d2e;"></div>
<div style="left:270px;top:986px;width:2px;height:18px;background:#3a3c3d;"></div>
<div class="t" style="left:51px;top:989px;font-size:12px;color:#a6a8a9;">Console</div>
<div class="t" style="left:135px;top:989px;font-size:12px;font-weight:bold;color:#c6c8c9;">Event List - Track 2</div>
<svg style="left:256px;top:990px;" width="10" height="10" viewBox="0 0 10 10"><path d="M1 1L9 9M9 1L1 9" stroke="#b8b8b8" stroke-width="1.8"/></svg>
<svg style="left:1616px;top:988px;" width="14" height="14" viewBox="0 0 14 14"><rect x="1.5" y="1.5" width="7" height="6" stroke="#e4e4e4" stroke-width="1.3" fill="none"/><rect x="5.5" y="6.5" width="7" height="6" stroke="#e4e4e4" stroke-width="1.3" fill="#4a4c4d"/></svg>
<svg style="left:1633px;top:991px;" width="8" height="8" viewBox="0 0 8 8"><path d="M0.5 1H7.5L4 7Z" fill="#dcdcdc"/></svg>
<svg style="left:1646px;top:989px;" width="9" height="12" viewBox="0 0 9 12"><path d="M0.5 0.5H8.5L4.5 5ZM0.5 6.5H8.5L4.5 11Z" fill="#dcdcdc"/></svg>
<div style="left:89px;top:520px;width:194px;height:466px;background:#f0f0f0;border:1px solid #9a9a9a;box-shadow:2px 2px 3px rgba(0,0,0,0.35);"></div>
<div style="left:119px;top:523px;width:1px;height:460px;background:#e0e0e0;"></div>
<div style="left:120px;top:523px;width:1px;height:460px;background:#fff;"></div>
<div class="t" style="left:124px;top:528px;font-size:12px;color:#0c0c0c;">Event Manager...</div>
<div style="left:120px;top:548px;width:160px;height:1px;background:#d7d7d7;"></div>
<div style="left:120px;top:549px;width:160px;height:1px;background:#fff;"></div>
<div style="left:92px;top:552px;width:22px;height:22px;background:#c8e2f5;border:1px solid #4c9edb;box-shadow:inset 0 0 0 1px #b4e0f8;"></div>
<svg style="left:96px;top:557px;" width="14" height="12" viewBox="0 0 14 12"><path d="M2.5 6L5.5 9.5L11.5 2" stroke="#111" stroke-width="2.2" fill="none"/></svg>
<div class="t" style="left:124px;top:557px;font-size:12px;color:#0c0c0c;">Notes</div>
<div style="left:92px;top:574px;width:22px;height:22px;background:#c8e2f5;border:1px solid #4c9edb;box-shadow:inset 0 0 0 1px #b4e0f8;"></div>
<svg style="left:96px;top:579px;" width="14" height="12" viewBox="0 0 14 12"><path d="M2.5 6L5.5 9.5L11.5 2" stroke="#111" stroke-width="2.2" fill="none"/></svg>
<div class="t" style="left:124px;top:579px;font-size:12px;color:#0c0c0c;">Key Aftertouch</div>
<div style="left:92px;top:596px;width:22px;height:22px;background:#c8e2f5;border:1px solid #4c9edb;box-shadow:inset 0 0 0 1px #b4e0f8;"></div>
<svg style="left:96px;top:601px;" width="14" height="12" viewBox="0 0 14 12"><path d="M2.5 6L5.5 9.5L11.5 2" stroke="#111" stroke-width="2.2" fill="none"/></svg>
<div class="t" style="left:124px;top:601px;font-size:12px;color:#0c0c0c;">Controller</div>
<div style="left:92px;top:618px;width:22px;height:22px;background:#c8e2f5;border:1px solid #4c9edb;box-shadow:inset 0 0 0 1px #b4e0f8;"></div>
<svg style="left:96px;top:623px;" width="14" height="12" viewBox="0 0 14 12"><path d="M2.5 6L5.5 9.5L11.5 2" stroke="#111" stroke-width="2.2" fill="none"/></svg>
<div class="t" style="left:124px;top:623px;font-size:12px;color:#0c0c0c;">Patch Change</div>
<div style="left:92px;top:640px;width:22px;height:22px;background:#c8e2f5;border:1px solid #4c9edb;box-shadow:inset 0 0 0 1px #b4e0f8;"></div>
<svg style="left:96px;top:645px;" width="14" height="12" viewBox="0 0 14 12"><path d="M2.5 6L5.5 9.5L11.5 2" stroke="#111" stroke-width="2.2" fill="none"/></svg>
<div class="t" style="left:124px;top:645px;font-size:12px;color:#0c0c0c;">Channel Aftertouch</div>
<div style="left:92px;top:662px;width:22px;height:22px;background:#c8e2f5;border:1px solid #4c9edb;box-shadow:inset 0 0 0 1px #b4e0f8;"></div>
<svg style="left:96px;top:667px;" width="14" height="12" viewBox="0 0 14 12"><path d="M2.5 6L5.5 9.5L11.5 2" stroke="#111" stroke-width="2.2" fill="none"/></svg>
<div class="t" style="left:124px;top:667px;font-size:12px;color:#0c0c0c;">Pitch Wheel</div>
<div style="left:92px;top:684px;width:22px;height:22px;background:#c8e2f5;border:1px solid #4c9edb;box-shadow:inset 0 0 0 1px #b4e0f8;"></div>
<svg style="left:96px;top:689px;" width="14" height="12" viewBox="0 0 14 12"><path d="M2.5 6L5.5 9.5L11.5 2" stroke="#111" stroke-width="2.2" fill="none"/></svg>
<div class="t" style="left:124px;top:689px;font-size:12px;color:#0c0c0c;">RPN</div>
<div style="left:92px;top:706px;width:22px;height:22px;background:#c8e2f5;border:1px solid #4c9edb;box-shadow:inset 0 0 0 1px #b4e0f8;"></div>
<svg style="left:96px;top:711px;" width="14" height="12" viewBox="0 0 14 12"><path d="M2.5 6L5.5 9.5L11.5 2" stroke="#111" stroke-width="2.2" fill="none"/></svg>
<div class="t" style="left:124px;top:711px;font-size:12px;color:#0c0c0c;">NRPN</div>
<div style="left:120px;top:731px;width:160px;height:1px;background:#d7d7d7;"></div>
<div style="left:120px;top:732px;width:160px;height:1px;background:#fff;"></div>
<div style="left:92px;top:735px;width:22px;height:22px;background:#c8e2f5;border:1px solid #4c9edb;box-shadow:inset 0 0 0 1px #b4e0f8;"></div>
<svg style="left:96px;top:740px;" width="14" height="12" viewBox="0 0 14 12"><path d="M2.5 6L5.5 9.5L11.5 2" stroke="#111" stroke-width="2.2" fill="none"/></svg>
<div class="t" style="left:124px;top:740px;font-size:12px;color:#0c0c0c;">Articulation</div>
<div style="left:92px;top:757px;width:22px;height:22px;background:#c8e2f5;border:1px solid #4c9edb;box-shadow:inset 0 0 0 1px #b4e0f8;"></div>
<svg style="left:96px;top:762px;" width="14" height="12" viewBox="0 0 14 12"><path d="M2.5 6L5.5 9.5L11.5 2" stroke="#111" stroke-width="2.2" fill="none"/></svg>
<div class="t" style="left:124px;top:762px;font-size:12px;color:#0c0c0c;">Sysx Bank</div>
<div style="left:92px;top:779px;width:22px;height:22px;background:#c8e2f5;border:1px solid #4c9edb;box-shadow:inset 0 0 0 1px #b4e0f8;"></div>
<svg style="left:96px;top:784px;" width="14" height="12" viewBox="0 0 14 12"><path d="M2.5 6L5.5 9.5L11.5 2" stroke="#111" stroke-width="2.2" fill="none"/></svg>
<div class="t" style="left:124px;top:784px;font-size:12px;color:#0c0c0c;">Sysx Data</div>
<div style="left:92px;top:801px;width:22px;height:22px;background:#c8e2f5;border:1px solid #4c9edb;box-shadow:inset 0 0 0 1px #b4e0f8;"></div>
<svg style="left:96px;top:806px;" width="14" height="12" viewBox="0 0 14 12"><path d="M2.5 6L5.5 9.5L11.5 2" stroke="#111" stroke-width="2.2" fill="none"/></svg>
<div class="t" style="left:124px;top:806px;font-size:12px;color:#0c0c0c;">Text</div>
<div style="left:92px;top:823px;width:22px;height:22px;background:#c8e2f5;border:1px solid #4c9edb;box-shadow:inset 0 0 0 1px #b4e0f8;"></div>
<svg style="left:96px;top:828px;" width="14" height="12" viewBox="0 0 14 12"><path d="M2.5 6L5.5 9.5L11.5 2" stroke="#111" stroke-width="2.2" fill="none"/></svg>
<div class="t" style="left:124px;top:828px;font-size:12px;color:#0c0c0c;">Lyrics</div>
<div style="left:92px;top:845px;width:22px;height:22px;background:#c8e2f5;border:1px solid #4c9edb;box-shadow:inset 0 0 0 1px #b4e0f8;"></div>
<svg style="left:96px;top:850px;" width="14" height="12" viewBox="0 0 14 12"><path d="M2.5 6L5.5 9.5L11.5 2" stroke="#111" stroke-width="2.2" fill="none"/></svg>
<div class="t" style="left:124px;top:850px;font-size:12px;color:#0c0c0c;">MCI</div>
<div style="left:92px;top:867px;width:22px;height:22px;background:#c8e2f5;border:1px solid #4c9edb;box-shadow:inset 0 0 0 1px #b4e0f8;"></div>
<svg style="left:96px;top:872px;" width="14" height="12" viewBox="0 0 14 12"><path d="M2.5 6L5.5 9.5L11.5 2" stroke="#111" stroke-width="2.2" fill="none"/></svg>
<div class="t" style="left:124px;top:872px;font-size:12px;color:#0c0c0c;">Audio</div>
<div style="left:92px;top:889px;width:22px;height:22px;background:#c8e2f5;border:1px solid #4c9edb;box-shadow:inset 0 0 0 1px #b4e0f8;"></div>
<svg style="left:96px;top:894px;" width="14" height="12" viewBox="0 0 14 12"><path d="M2.5 6L5.5 9.5L11.5 2" stroke="#111" stroke-width="2.2" fill="none"/></svg>
<div class="t" style="left:124px;top:894px;font-size:12px;color:#0c0c0c;">Shape</div>
<div style="left:120px;top:914px;width:160px;height:1px;background:#d7d7d7;"></div>
<div style="left:120px;top:915px;width:160px;height:1px;background:#fff;"></div>
<div style="left:92px;top:918px;width:22px;height:22px;background:#c8e2f5;border:1px solid #4c9edb;box-shadow:inset 0 0 0 1px #b4e0f8;"></div>
<svg style="left:96px;top:923px;" width="14" height="12" viewBox="0 0 14 12"><path d="M2.5 6L5.5 9.5L11.5 2" stroke="#111" stroke-width="2.2" fill="none"/></svg>
<div class="t" style="left:124px;top:923px;font-size:12px;color:#0c0c0c;">Expression</div>
<div style="left:92px;top:940px;width:22px;height:22px;background:#c8e2f5;border:1px solid #4c9edb;box-shadow:inset 0 0 0 1px #b4e0f8;"></div>
<svg style="left:96px;top:945px;" width="14" height="12" viewBox="0 0 14 12"><path d="M2.5 6L5.5 9.5L11.5 2" stroke="#111" stroke-width="2.2" fill="none"/></svg>
<div class="t" style="left:124px;top:945px;font-size:12px;color:#0c0c0c;">Hairpin</div>
<div style="left:92px;top:962px;width:22px;height:22px;background:#c8e2f5;border:1px solid #4c9edb;box-shadow:inset 0 0 0 1px #b4e0f8;"></div>
<svg style="left:96px;top:967px;" width="14" height="12" viewBox="0 0 14 12"><path d="M2.5 6L5.5 9.5L11.5 2" stroke="#111" stroke-width="2.2" fill="none"/></svg>
<div class="t" style="left:124px;top:967px;font-size:12px;color:#0c0c0c;">Chords</div>
<div style="left:0px;top:1009px;width:1680px;height:41px;background:linear-gradient(90deg,#45b5ba 0%,#50b9b2 27%,#50b9b2 100%);"></div>
<svg style="left:0px;top:1009px;" width="1680" height="41" viewBox="0 0 1680 41"><defs><linearGradient id="tbg" x1="0" y1="0" x2="1" y2="0"><stop offset="0" stop-color="#4a9bc1"/><stop offset="0.35" stop-color="#49a2bf"/><stop offset="0.75" stop-color="#46acbc"/><stop offset="1" stop-color="#44b2ba"/></linearGradient></defs><path d="M422 41L478 0H1482L1440 41Z" fill="url(#tbg)"/><path d="M1440 41L1482 0H1680V41Z" fill="#4a9ec4"/><path d="M422 41L478 0H520L455 41Z" fill="#4ca8bb" opacity="0.7"/><path d="M618 0L640 41" stroke="#3f93b4" stroke-width="1.5" opacity="0.6"/><path d="M820 0L836 41" stroke="#3f93b4" stroke-width="1.5" opacity="0.6"/><path d="M1250 0L1290 41" stroke="#3ea0b0" stroke-width="1.5" opacity="0.5"/><path d="M110 0L150 41" stroke="#3fa5ad" stroke-width="1.2" opacity="0.5"/></svg>
<div style="left:0px;top:1009px;width:1680px;height:1px;background:rgba(255,255,255,0.14);"></div>
<svg style="left:9px;top:1015px;" width="30" height="30" viewBox="0 0 30 30"><path d="M1 5.5L12 4V14H1ZM13.5 3.8L28 1.8V14H13.5ZM1 15.5H12V25.5L1 24ZM13.5 15.5H28V27.8L13.5 25.7Z" fill="#fff"/></svg>
<svg style="left:63px;top:1013px;" width="38" height="36" viewBox="0 0 38 36"><defs><linearGradient id="fy" x1="0" y1="0" x2="0" y2="1"><stop offset="0" stop-color="#fdf0b8"/><stop offset="1" stop-color="#f3d679"/></linearGradient><linearGradient id="fb" x1="0" y1="0" x2="0" y2="1"><stop offset="0" stop-color="#d6ecf8"/><stop offset="1" stop-color="#6aa8dc"/></linearGradient></defs><path d="M3 5Q3 4 4 4H14L16 6H33V29H3Z" fill="#ecc868"/><path d="M12 7H22V10H12Z" fill="#fff8e0"/><path d="M20 9H30V12H20Z" fill="#fff8e0"/><rect x="5" y="5" width="4" height="2.4" fill="#2ea83a"/><rect x="13" y="7" width="4" height="2.4" fill="#cf4a2c"/><rect x="21" y="9" width="4" height="2.4" fill="#3a8ad8"/><path d="M3 9.5H18L20 12H33.5V30H3Z" fill="url(#fy)"/><path d="M7 20.5Q7 19.5 8 19.5H28Q29 19.5 29 20.5V32H23.5V25H12.5V32H7Z" fill="url(#fb)" stroke="#8ec4ea" stroke-width="0.6"/></svg>
<div style="left:114px;top:1011px;width:59px;height:39px;background:rgba(255,255,255,0.16);border:1px solid rgba(255,255,255,0.38);"></div>
<div style="left:176px;top:1011px;width:59px;height:39px;background:rgba(255,255,255,0.16);border:1px solid rgba(255,255,255,0.38);"></div>
<div style="left:238px;top:1011px;width:59px;height:39px;background:rgba(255,255,255,0.38);border:1px solid rgba(255,255,255,0.6);"></div>
<svg style="left:124px;top:1013px;" width="40" height="34" viewBox="0 0 40 34"><defs><linearGradient id="np" x1="0" y1="0" x2="0.3" y2="1"><stop offset="0" stop-color="#cfe6f0"/><stop offset="0.5" stop-color="#8cc4dc"/><stop offset="1" stop-color="#3f9bbf"/></linearGradient></defs><path d="M31 6L35 8L34 27L27 31Z" fill="#cdb27a"/><path d="M30 5.5L33.5 7.5L32.5 27L26 30.5Z" fill="#f4f4f4"/><path d="M14 4L31 6L22 29L4 22Z" fill="url(#np)"/><path d="M4 22L22 29L26 30.5L25 31.5L21 30.5L4 23.5Z" fill="#eef3f6"/><path d="M14.5 3.2L31.5 5.2L31 6.8L14 4.8Z" fill="#8a8a8a"/></svg>
<svg style="left:188px;top:1013px;" width="34" height="34" viewBox="0 0 34 34"><ellipse cx="17" cy="17" rx="15" ry="15.5" fill="#e0222c"/><ellipse cx="17" cy="17" rx="7" ry="11.5" fill="#b6dfe4"/><path d="M23 4.5Q31 9 31 17T23 29.5Q27 24 27 17T23 4.5Z" fill="#b8141f"/></svg>
<div style="left:251px;top:1014px;width:32px;height:32px;background:linear-gradient(#f0652b,#e2501a);"></div>
<div style="left:262px;top:1031px;width:5px;height:3px;background:#ffe4d6;"></div>
<div style="left:262px;top:1036px;width:5px;height:3px;background:#ffe4d6;"></div>
<div style="left:268px;top:1026px;width:5px;height:3px;background:#ffe4d6;"></div>
<div style="left:268px;top:1031px;width:5px;height:3px;background:#ffe4d6;"></div>
<div style="left:268px;top:1036px;width:5px;height:3px;background:#ffe4d6;"></div>
<svg style="left:1434px;top:1022px;" width="17" height="17" viewBox="0 0 17 17"><rect x="1" y="1" width="15" height="15" fill="#8a8a8a"/><rect x="1" y="8" width="15" height="8" fill="#fff"/><path d="M3 8V14M5 8V14M7 8V14M9 8V14M11 8V14M13 8V14" stroke="#111" stroke-width="0.7"/><circle cx="5.5" cy="4" r="1.8" fill="#a01818"/><circle cx="10.5" cy="4" r="1.8" fill="#a01818"/></svg>
<svg style="left:1457px;top:1021px;" width="18" height="18" viewBox="0 0 18 18"><path d="M9 1L12 5L17 4L14 9L17 14L12 13L9 17L6 13L1 14L4 9L1 4L6 5Z" fill="#f58220"/><circle cx="9" cy="9" r="3" fill="none" stroke="#fff" stroke-width="1.5"/></svg>
<svg style="left:1483px;top:1022px;" width="17" height="17" viewBox="0 0 17 17"><rect x="0.5" y="0.5" width="16" height="16" rx="1.5" fill="#23282b"/><path d="M2.5 8.5Q6 3.5 12 4.5V6Q7 5.5 5 8.5Q7 11.5 12 11V13Q6 13.5 2.5 8.5Z" fill="#76b900"/><path d="M7 8.5Q8.5 6.5 11 7V10Q8.5 10.5 7 8.5Z" fill="#76b900"/><path d="M12 4.5H14.5V13H12Z" fill="#76b900"/></svg>
<svg style="left:1506px;top:1021px;" width="19" height="19" viewBox="0 0 19 19"><rect x="6" y="4" width="11" height="8" fill="none" stroke="#fff" stroke-width="1.4"/><path d="M11.5 12V15M8 15.5H15" stroke="#fff" stroke-width="1.4"/><rect x="1.5" y="2" width="4" height="6" rx="1" fill="none" stroke="#fff" stroke-width="1.3"/><path d="M3.5 8V16" stroke="#fff" stroke-width="1.3"/></svg>
<svg style="left:1530px;top:1021px;" width="19" height="19" viewBox="0 0 19 19"><path d="M2 7H5L9 3V16L5 12H2Z" fill="#fff"/><path d="M11 7Q12.5 9.5 11 12M13 5Q15.5 9.5 13 14M15 3.5Q18.5 9.5 15 15.5" stroke="#fff" stroke-width="1.1" fill="none"/></svg>
<div class="t" style="left:1562px;top:1025px;font-size:12px;color:#fff;">РУС</div>
<div class="c" style="left:1590px;top:1016px;width:82px;font-size:12px;color:#fff;">9:11</div>
<div class="c" style="left:1590px;top:1034px;width:82px;font-size:12px;color:#fff;letter-spacing:-0.2px;">Пт 20.11.20</div>
</body></html>
